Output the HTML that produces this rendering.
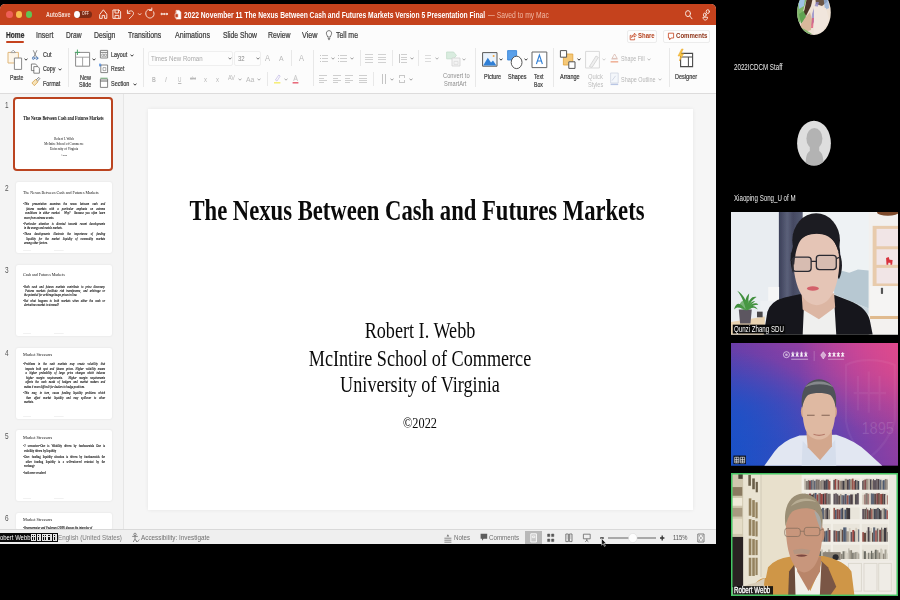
<!DOCTYPE html>
<html><head><meta charset="utf-8">
<style>
*{margin:0;padding:0;box-sizing:border-box}
html,body{width:900px;height:600px;overflow:hidden;background:#000;font-family:"Liberation Sans",sans-serif}
.t{position:absolute;white-space:nowrap;display:block}
svg{display:block}
</style></head><body>
<div style="position:absolute;left:0.0px;top:4.0px;width:716.0px;height:540.0px;background:#f1f1f1;border-radius:5px 5px 0 0;"></div>
<div style="position:absolute;left:0.0px;top:4.0px;width:716.0px;height:21.0px;background:#c5421d;border-radius:5px 5px 0 0;"></div>
<div style="position:absolute;left:6.2px;top:11.0px;width:6.4px;height:7.0px;background:#ee5f57;border-radius:50%;"></div>
<div style="position:absolute;left:16.1px;top:11.0px;width:6.4px;height:7.0px;background:#f6be4f;border-radius:50%;"></div>
<div style="position:absolute;left:26.1px;top:11.0px;width:6.4px;height:7.0px;background:#5fc454;border-radius:50%;"></div>
<span class="t" style="left:46.0px;top:11.1px;font-size:7.2px;line-height:7.2px;color:#f6dcd2;font-family:'Liberation Sans',sans-serif;transform-origin:0 50%;transform:scaleX(0.735);font-weight:bold;">AutoSave</span>
<div style="position:absolute;left:73.6px;top:10.6px;width:18.8px;height:7.8px;background:#7d2a14;border-radius:4px;"></div>
<div style="position:absolute;left:74.0px;top:10.8px;width:6.4px;height:7.4px;background:#fff;border-radius:50%;"></div>
<span class="t" style="left:82.0px;top:12.3px;font-size:4.6px;line-height:4.6px;color:#e8c5b8;font-family:'Liberation Sans',sans-serif;transform-origin:0 50%;transform:scaleX(0.761);font-weight:bold;">OFF</span>
<svg style="position:absolute;left:96px;top:5.3px" width="90" height="18" viewBox="0 0 90 18" fill="none" stroke="#f8e3da" stroke-width="1" stroke-linecap="round" stroke-linejoin="round">
<path d="M4 9.2 L7.4 4.8 L10.8 9.2 V13.4 H8.6 V10.4 H6.2 V13.4 H4 Z"/>
<path d="M17.3 5 H23 L24.6 6.6 V13.4 H17.3 Z M19 5 V8 H22.6 V5 M19 13.4 V10.4 H22.8 V13.4"/>
<path d="M31.4 5.2 V8.4 H34 M31.6 8.2 C32.6 5.4 36.6 5 37.4 7.6 C38 9.8 35.6 11.6 33.4 13.6"/>
<path d="M42.4 8.6 L43.7 10 L45 8.6" stroke-width=".9"/>
<path d="M55.6 5 C52.8 3.2 49.4 5.4 49.8 9 C50.2 12.6 54 14.2 56.6 12 C58.2 10.6 58.4 8.4 57.6 6.8 M55.8 3 V5.4 H53.4"/>
<circle cx="65.6" cy="9" r=".7" fill="#f8e3da"/><circle cx="68.2" cy="9" r=".7" fill="#f8e3da"/><circle cx="70.8" cy="9" r=".7" fill="#f8e3da"/>
<path d="M80.4 5.4 H83.2 L84.8 7.2 V14 H80.4 Z" fill="#fff" stroke="#fff" stroke-width=".6"/>
<path d="M79.4 8.8 H82.2 V12.4 H79.4 Z" fill="#c5421d" stroke="#fff" stroke-width=".5"/>
</svg>
<span class="t" style="left:183.5px;top:11.7px;font-size:8.2px;line-height:8.2px;color:#fff;font-family:'Liberation Sans',sans-serif;transform-origin:0 50%;transform:scaleX(0.819);font-weight:bold;">2022 November 11 The Nexus Between Cash and Futures Markets Version 5 Presentation Final</span>
<span class="t" style="left:487.5px;top:11.7px;font-size:8.2px;line-height:8.2px;color:#f0b9a4;font-family:'Liberation Sans',sans-serif;transform-origin:0 50%;transform:scaleX(0.826);">— Saved to my Mac</span>
<svg style="position:absolute;left:682px;top:8px" width="32" height="14" viewBox="0 0 32 14" fill="none" stroke="#f8e3da" stroke-width="1" stroke-linecap="round">
<ellipse cx="6" cy="5.6" rx="2.5" ry="3"/><path d="M7.8 8 L10 10.8"/>
<ellipse cx="25.8" cy="3.6" rx="1.6" ry="1.9"/><ellipse cx="22.8" cy="6.8" rx="1.4" ry="1.7"/><path d="M21 9.6 C21 13 25.6 13 25.6 9.6 Z"/>
</svg>
<div style="position:absolute;left:0.0px;top:25.0px;width:716.0px;height:67.5px;background:#fcfcfc;"></div>
<div style="position:absolute;left:0.0px;top:92.5px;width:716.0px;height:1.0px;background:#dddcdc;"></div>
<span class="t" style="left:5.6px;top:30.5px;font-size:8.6px;line-height:8.6px;color:#2b2b2b;font-family:'Liberation Sans',sans-serif;transform-origin:0 50%;transform:scaleX(0.770);-webkit-text-stroke:.22px #2b2b2b;font-weight:bold;">Home</span>
<span class="t" style="left:36.0px;top:30.5px;font-size:8.6px;line-height:8.6px;color:#3a3a3a;font-family:'Liberation Sans',sans-serif;transform-origin:0 50%;transform:scaleX(0.809);-webkit-text-stroke:.22px #3a3a3a;">Insert</span>
<span class="t" style="left:66.4px;top:30.5px;font-size:8.6px;line-height:8.6px;color:#3a3a3a;font-family:'Liberation Sans',sans-serif;transform-origin:0 50%;transform:scaleX(0.777);-webkit-text-stroke:.22px #3a3a3a;">Draw</span>
<span class="t" style="left:94.0px;top:30.5px;font-size:8.6px;line-height:8.6px;color:#3a3a3a;font-family:'Liberation Sans',sans-serif;transform-origin:0 50%;transform:scaleX(0.799);-webkit-text-stroke:.22px #3a3a3a;">Design</span>
<span class="t" style="left:128.4px;top:30.5px;font-size:8.6px;line-height:8.6px;color:#3a3a3a;font-family:'Liberation Sans',sans-serif;transform-origin:0 50%;transform:scaleX(0.795);-webkit-text-stroke:.22px #3a3a3a;">Transitions</span>
<span class="t" style="left:175.0px;top:30.5px;font-size:8.6px;line-height:8.6px;color:#3a3a3a;font-family:'Liberation Sans',sans-serif;transform-origin:0 50%;transform:scaleX(0.823);-webkit-text-stroke:.22px #3a3a3a;">Animations</span>
<span class="t" style="left:222.5px;top:30.5px;font-size:8.6px;line-height:8.6px;color:#3a3a3a;font-family:'Liberation Sans',sans-serif;transform-origin:0 50%;transform:scaleX(0.790);-webkit-text-stroke:.22px #3a3a3a;">Slide Show</span>
<span class="t" style="left:267.5px;top:30.5px;font-size:8.6px;line-height:8.6px;color:#3a3a3a;font-family:'Liberation Sans',sans-serif;transform-origin:0 50%;transform:scaleX(0.798);-webkit-text-stroke:.22px #3a3a3a;">Review</span>
<span class="t" style="left:301.5px;top:30.5px;font-size:8.6px;line-height:8.6px;color:#3a3a3a;font-family:'Liberation Sans',sans-serif;transform-origin:0 50%;transform:scaleX(0.839);-webkit-text-stroke:.22px #3a3a3a;">View</span>
<span class="t" style="left:336.0px;top:30.5px;font-size:8.6px;line-height:8.6px;color:#3a3a3a;font-family:'Liberation Sans',sans-serif;transform-origin:0 50%;transform:scaleX(0.808);-webkit-text-stroke:.22px #3a3a3a;">Tell me</span>
<div style="position:absolute;left:6.0px;top:41.0px;width:18.0px;height:1.6px;background:#c5421d;border-radius:1px;"></div>
<svg style="position:absolute;left:324px;top:29px" width="10" height="12" viewBox="0 0 10 12" fill="none" stroke="#555" stroke-width=".8"><path d="M3.6 8 C3.6 6.6 2.4 6 2.4 4.2 C2.4 .8 7.6 .8 7.6 4.2 C7.6 6 6.4 6.6 6.4 8 Z M3.8 9.4 H6.2 M4.2 10.6 H5.8"/></svg>
<div style="position:absolute;left:626.7px;top:29.5px;width:30.6px;height:13.2px;background:#fdfdfd;border:1px solid #ececec;border-radius:2px;"></div>
<div style="position:absolute;left:663.3px;top:29.5px;width:46.7px;height:13.2px;background:#fdfdfd;border:1px solid #ececec;border-radius:2px;"></div>
<span class="t" style="left:638.3px;top:32.1px;font-size:7.8px;line-height:7.8px;color:#b5421f;font-family:'Liberation Sans',sans-serif;transform-origin:0 50%;transform:scaleX(0.770);font-weight:bold;">Share</span>
<span class="t" style="left:676.0px;top:32.1px;font-size:7.8px;line-height:7.8px;color:#8f3418;font-family:'Liberation Sans',sans-serif;transform-origin:0 50%;transform:scaleX(0.777);font-weight:bold;">Comments</span>
<svg style="position:absolute;left:628px;top:31px" width="50" height="11" viewBox="0 0 50 11" fill="none" stroke="#c5421d" stroke-width=".8" stroke-linejoin="round"><path d="M3.4 4.4 H2.2 V8.8 H6.6 V7.4 M3.6 6.6 C3.8 4.6 5 3.6 6.4 3.6 V2.2 L8.4 4.2 L6.4 6.2 V4.8 C5.2 4.8 4.4 5.4 3.6 6.6 Z"/><path d="M40.4 2.2 H45.6 V7 H43 L41.6 8.8 V7 H40.4 Z"/></svg>
<svg style="position:absolute;left:6px;top:48px" width="20" height="24" viewBox="0 0 20 24" fill="none" stroke-linejoin="round">
<path d="M2 4.4 H12.4 V15 H2 Z" fill="#fdf6ea" stroke="#e0b679" stroke-width="1"/>
<path d="M4.8 4.6 L7.2 2.2 L9.6 4.6 Z" fill="#fff" stroke="#9a9a9a" stroke-width=".9"/>
<path d="M8.4 10 H15.6 V21.4 H8.4 Z" fill="#fff" stroke="#8a8a8a" stroke-width="1"/>
</svg>
<svg style="position:absolute;left:23.6px;top:58.1px" width="4" height="3" viewBox="0 0 4 3" fill="none" stroke="#333" stroke-width=".95"><path d="M.5 .6 L2 2.2 L3.5 .6"/></svg>
<span class="t" style="left:10.0px;top:73.8px;font-size:7.2px;line-height:7.2px;color:#3a3a3a;font-family:'Liberation Sans',sans-serif;transform-origin:0 50%;transform:scaleX(0.722);-webkit-text-stroke:.22px #3a3a3a;">Paste</span>
<svg style="position:absolute;left:30px;top:48px" width="12" height="40" viewBox="0 0 12 40" fill="none" stroke-linejoin="round" stroke-linecap="round">
<path d="M3.4 2.6 L6.4 9 M6.8 2.6 L3.8 9" stroke="#777" stroke-width=".8"/><ellipse cx="3.4" cy="10.2" rx="1" ry="1.3" stroke="#3f6fb0" stroke-width=".8"/><ellipse cx="6.8" cy="10.2" rx="1" ry="1.3" stroke="#3f6fb0" stroke-width=".8"/>
<path d="M1.8 16 H5.6 L7 17.6 V22.6 H1.8 Z" fill="#fff" stroke="#666" stroke-width=".8"/><path d="M4.2 18.6 H8 L9.4 20.2 V25.2 H4.2 Z" fill="#fff" stroke="#666" stroke-width=".8"/>
<path d="M2.2 34.6 L5.6 31.4 L8 33.8 L4.6 37.4 Z" fill="#f7e3b8" stroke="#d6a24c" stroke-width=".8"/><path d="M6.4 31.6 L8.8 29.4 L9.8 30.6 L7.6 33" stroke="#666" stroke-width=".8"/>
</svg>
<span class="t" style="left:42.5px;top:51.4px;font-size:7.2px;line-height:7.2px;color:#3a3a3a;font-family:'Liberation Sans',sans-serif;transform-origin:0 50%;transform:scaleX(0.759);-webkit-text-stroke:.22px #3a3a3a;">Cut</span>
<span class="t" style="left:42.5px;top:65.4px;font-size:7.2px;line-height:7.2px;color:#3a3a3a;font-family:'Liberation Sans',sans-serif;transform-origin:0 50%;transform:scaleX(0.744);-webkit-text-stroke:.22px #3a3a3a;">Copy</span>
<svg style="position:absolute;left:57.7px;top:67.9px" width="4" height="3" viewBox="0 0 4 3" fill="none" stroke="#333" stroke-width=".95"><path d="M.5 .6 L2 2.2 L3.5 .6"/></svg>
<span class="t" style="left:42.5px;top:80.0px;font-size:7.2px;line-height:7.2px;color:#3a3a3a;font-family:'Liberation Sans',sans-serif;transform-origin:0 50%;transform:scaleX(0.754);-webkit-text-stroke:.22px #3a3a3a;">Format</span>
<div style="position:absolute;left:68.3px;top:48.0px;width:0.8px;height:39.0px;background:#e8e8e8;"></div>
<svg style="position:absolute;left:74px;top:48px" width="18" height="20" viewBox="0 0 18 20" fill="none">
<path d="M1.6 4.4 H15.6 V18.2 H1.6 Z" fill="#fff" stroke="#8a8a8a" stroke-width="1"/><path d="M1.6 9.2 H15.6 M8.6 9.2 V18.2" stroke="#9a9a9a" stroke-width=".9"/>
<path d="M3.4 1.6 V7 M.8 4.4 H6" stroke="#4ea66a" stroke-width="1"/></svg>
<svg style="position:absolute;left:92.2px;top:58.1px" width="4" height="3" viewBox="0 0 4 3" fill="none" stroke="#333" stroke-width=".95"><path d="M.5 .6 L2 2.2 L3.5 .6"/></svg>
<span class="t" style="left:80.0px;top:73.9px;font-size:7.2px;line-height:7.2px;color:#3a3a3a;font-family:'Liberation Sans',sans-serif;transform-origin:0 50%;transform:scaleX(0.764);-webkit-text-stroke:.22px #3a3a3a;">New</span>
<span class="t" style="left:79.0px;top:81.0px;font-size:7.2px;line-height:7.2px;color:#3a3a3a;font-family:'Liberation Sans',sans-serif;transform-origin:0 50%;transform:scaleX(0.768);-webkit-text-stroke:.22px #3a3a3a;">Slide</span>
<svg style="position:absolute;left:99px;top:48px" width="10" height="41" viewBox="0 0 10 41" fill="none" stroke="#777" stroke-width=".9">
<path d="M1.4 2.4 H8.6 V10 H1.4 Z" fill="#fff"/><path d="M1.4 4.4 H8.6"/><path d="M2.8 6 H4.6 V8.4 H2.8 Z M5.6 6 H7.4 V8.4 H5.6 Z" stroke-width=".6"/>
<path d="M1.8 17 H8.6 V24.6 H1.8 Z" fill="#fff"/><path d="M1 15.4 V18.6 M0 17 H2.4" stroke="#3b7dd8"/><path d="M4 19.6 H6.8 V22.6 H4 Z" stroke-width=".6"/>
<path d="M1.4 31 H8.6 V39.4 H1.4 Z" fill="#fff"/><path d="M1.4 33 H8.6" stroke="#555"/><path d="M1.4 30.2 H8.6" stroke="#6aa86f"/>
</svg>
<span class="t" style="left:111.3px;top:51.2px;font-size:7.2px;line-height:7.2px;color:#3a3a3a;font-family:'Liberation Sans',sans-serif;transform-origin:0 50%;transform:scaleX(0.749);-webkit-text-stroke:.22px #3a3a3a;">Layout</span>
<svg style="position:absolute;left:130.2px;top:53.7px" width="4" height="3" viewBox="0 0 4 3" fill="none" stroke="#333" stroke-width=".95"><path d="M.5 .6 L2 2.2 L3.5 .6"/></svg>
<span class="t" style="left:111.3px;top:65.2px;font-size:7.2px;line-height:7.2px;color:#3a3a3a;font-family:'Liberation Sans',sans-serif;transform-origin:0 50%;transform:scaleX(0.713);-webkit-text-stroke:.22px #3a3a3a;">Reset</span>
<span class="t" style="left:111.3px;top:80.0px;font-size:7.2px;line-height:7.2px;color:#3a3a3a;font-family:'Liberation Sans',sans-serif;transform-origin:0 50%;transform:scaleX(0.766);-webkit-text-stroke:.22px #3a3a3a;">Section</span>
<svg style="position:absolute;left:132.7px;top:82.5px" width="4" height="3" viewBox="0 0 4 3" fill="none" stroke="#333" stroke-width=".95"><path d="M.5 .6 L2 2.2 L3.5 .6"/></svg>
<div style="position:absolute;left:142.5px;top:48.0px;width:0.8px;height:39.0px;background:#e8e8e8;"></div>
<div style="position:absolute;left:148.0px;top:50.8px;width:84.5px;height:15.0px;background:#fdfdfd;border:1px solid #efefef;border-radius:2px;"></div>
<div style="position:absolute;left:234.2px;top:50.8px;width:26.6px;height:15.0px;background:#fdfdfd;border:1px solid #efefef;border-radius:2px;"></div>
<span class="t" style="left:151.3px;top:54.8px;font-size:7.2px;line-height:7.2px;color:#a9a9a9;font-family:'Liberation Sans',sans-serif;transform-origin:0 50%;transform:scaleX(0.848);">Times New Roman</span>
<svg style="position:absolute;left:227.7px;top:57.1px" width="4" height="3" viewBox="0 0 4 3" fill="none" stroke="#777" stroke-width=".95"><path d="M.5 .6 L2 2.2 L3.5 .6"/></svg>
<span class="t" style="left:238.0px;top:54.8px;font-size:7.2px;line-height:7.2px;color:#8a8a8a;font-family:'Liberation Sans',sans-serif;transform-origin:0 50%;transform:scaleX(0.837);">32</span>
<svg style="position:absolute;left:255.5px;top:57.1px" width="4" height="3" viewBox="0 0 4 3" fill="none" stroke="#777" stroke-width=".95"><path d="M.5 .6 L2 2.2 L3.5 .6"/></svg>
<span class="t" style="left:265.0px;top:53.9px;font-size:8.6px;line-height:8.6px;color:#b9b9b9;font-family:'Liberation Sans',sans-serif;transform-origin:0 50%;transform:scaleX(0.872);">A</span>
<span class="t" style="left:278.7px;top:55.0px;font-size:7.6px;line-height:7.6px;color:#b9b9b9;font-family:'Liberation Sans',sans-serif;transform-origin:0 50%;transform:scaleX(0.908);">A</span>
<div style="position:absolute;left:291.0px;top:50.0px;width:0.8px;height:16.0px;background:#e8e8e8;"></div>
<span class="t" style="left:299.0px;top:53.9px;font-size:8.6px;line-height:8.6px;color:#b9b9b9;font-family:'Liberation Sans',sans-serif;transform-origin:0 50%;transform:scaleX(0.872);">A</span>
<span class="t" style="left:152.0px;top:75.5px;font-size:7.4px;line-height:7.4px;color:#b9b9b9;font-family:'Liberation Sans',sans-serif;transform-origin:0 50%;transform:scaleX(0.711);font-weight:bold;">B</span>
<span class="t" style="left:165.0px;top:75.5px;font-size:7.4px;line-height:7.4px;color:#b9b9b9;font-family:'Liberation Sans',sans-serif;transform-origin:0 50%;transform:scaleX(0.876);font-style:italic;">I</span>
<span class="t" style="left:178.0px;top:75.5px;font-size:7.4px;line-height:7.4px;color:#b9b9b9;font-family:'Liberation Sans',sans-serif;transform-origin:0 50%;transform:scaleX(0.636);text-decoration:underline;">U</span>
<span class="t" style="left:189.6px;top:76.4px;font-size:5.6px;line-height:5.6px;color:#b9b9b9;font-family:'Liberation Sans',sans-serif;transform-origin:0 50%;transform:scaleX(0.665);text-decoration:line-through;">abc</span>
<span class="t" style="left:204.0px;top:76.0px;font-size:7.4px;line-height:7.4px;color:#b9b9b9;font-family:'Liberation Sans',sans-serif;transform-origin:0 50%;transform:scaleX(0.811);">x</span>
<span class="t" style="left:216.4px;top:75.5px;font-size:7.4px;line-height:7.4px;color:#b9b9b9;font-family:'Liberation Sans',sans-serif;transform-origin:0 50%;transform:scaleX(0.811);">x</span>
<span class="t" style="left:227.8px;top:75.2px;font-size:6.8px;line-height:6.8px;color:#b9b9b9;font-family:'Liberation Sans',sans-serif;transform-origin:0 50%;transform:scaleX(0.817);">AV</span>
<svg style="position:absolute;left:238.3px;top:78.1px" width="4" height="3" viewBox="0 0 4 3" fill="none" stroke="#aaa" stroke-width=".95"><path d="M.5 .6 L2 2.2 L3.5 .6"/></svg>
<span class="t" style="left:246.4px;top:75.6px;font-size:7.2px;line-height:7.2px;color:#b9b9b9;font-family:'Liberation Sans',sans-serif;transform-origin:0 50%;transform:scaleX(0.954);">Aa</span>
<svg style="position:absolute;left:257.0px;top:78.1px" width="4" height="3" viewBox="0 0 4 3" fill="none" stroke="#aaa" stroke-width=".95"><path d="M.5 .6 L2 2.2 L3.5 .6"/></svg>
<div style="position:absolute;left:266.7px;top:72.0px;width:0.8px;height:14.0px;background:#e8e8e8;"></div>
<svg style="position:absolute;left:272px;top:73px" width="30" height="12" viewBox="0 0 30 12" fill="none"><path d="M3.4 7 L6.8 2 L8.2 3 L5 8 Z" stroke="#c9c2e8" stroke-width=".8"/><path d="M2 9.8 H8.4" stroke="#f5ec6a" stroke-width="1.4"/><path d="M21.6 8 L23.6 2.2 L25.6 8 M22.2 6.2 H25" stroke="#c4c4c4" stroke-width=".8"/><path d="M20.6 9.8 H26.4" stroke="#e65a6d" stroke-width="1.4"/></svg>
<svg style="position:absolute;left:283.8px;top:78.1px" width="4" height="3" viewBox="0 0 4 3" fill="none" stroke="#aaa" stroke-width=".95"><path d="M.5 .6 L2 2.2 L3.5 .6"/></svg>
<div style="position:absolute;left:313.0px;top:50.0px;width:0.8px;height:36.0px;background:#e8e8e8;"></div>
<div style="position:absolute;left:321.8px;top:55.2px;width:6.5px;height:0.8px;background:#cfcfcf;"></div>
<div style="position:absolute;left:321.8px;top:58.0px;width:6.5px;height:0.8px;background:#cfcfcf;"></div>
<div style="position:absolute;left:321.8px;top:60.8px;width:6.5px;height:0.8px;background:#cfcfcf;"></div>
<div style="position:absolute;left:319.6px;top:55.2px;width:1.2px;height:0.8px;background:#c4c4c4;"></div>
<div style="position:absolute;left:319.6px;top:58.0px;width:1.2px;height:0.8px;background:#c4c4c4;"></div>
<div style="position:absolute;left:319.6px;top:60.8px;width:1.2px;height:0.8px;background:#c4c4c4;"></div>
<div style="position:absolute;left:340.4px;top:55.2px;width:6.5px;height:0.8px;background:#cfcfcf;"></div>
<div style="position:absolute;left:340.4px;top:58.0px;width:6.5px;height:0.8px;background:#cfcfcf;"></div>
<div style="position:absolute;left:340.4px;top:60.8px;width:6.5px;height:0.8px;background:#cfcfcf;"></div>
<div style="position:absolute;left:338.3px;top:55.2px;width:1.2px;height:0.8px;background:#c4c4c4;"></div>
<div style="position:absolute;left:338.3px;top:58.0px;width:1.2px;height:0.8px;background:#c4c4c4;"></div>
<div style="position:absolute;left:338.3px;top:60.8px;width:1.2px;height:0.8px;background:#c4c4c4;"></div>
<svg style="position:absolute;left:330.7px;top:57.3px" width="4" height="3" viewBox="0 0 4 3" fill="none" stroke="#999" stroke-width=".95"><path d="M.5 .6 L2 2.2 L3.5 .6"/></svg>
<svg style="position:absolute;left:349.7px;top:57.3px" width="4" height="3" viewBox="0 0 4 3" fill="none" stroke="#999" stroke-width=".95"><path d="M.5 .6 L2 2.2 L3.5 .6"/></svg>
<div style="position:absolute;left:360.0px;top:50.0px;width:0.8px;height:16.0px;background:#e8e8e8;"></div>
<div style="position:absolute;left:365.0px;top:54.4px;width:8.0px;height:0.8px;background:#d2d2d2;"></div>
<div style="position:absolute;left:365.0px;top:56.8px;width:8.0px;height:0.8px;background:#d2d2d2;"></div>
<div style="position:absolute;left:365.0px;top:59.2px;width:8.0px;height:0.8px;background:#d2d2d2;"></div>
<div style="position:absolute;left:365.0px;top:61.6px;width:8.0px;height:0.8px;background:#d2d2d2;"></div>
<div style="position:absolute;left:378.3px;top:54.4px;width:8.0px;height:0.8px;background:#d2d2d2;"></div>
<div style="position:absolute;left:378.3px;top:56.8px;width:8.0px;height:0.8px;background:#d2d2d2;"></div>
<div style="position:absolute;left:378.3px;top:59.2px;width:8.0px;height:0.8px;background:#d2d2d2;"></div>
<div style="position:absolute;left:378.3px;top:61.6px;width:8.0px;height:0.8px;background:#d2d2d2;"></div>
<div style="position:absolute;left:391.7px;top:50.0px;width:0.8px;height:16.0px;background:#e8e8e8;"></div>
<div style="position:absolute;left:401.0px;top:54.4px;width:6.0px;height:0.8px;background:#cfcfcf;"></div>
<div style="position:absolute;left:401.0px;top:56.8px;width:6.0px;height:0.8px;background:#cfcfcf;"></div>
<div style="position:absolute;left:401.0px;top:59.2px;width:6.0px;height:0.8px;background:#cfcfcf;"></div>
<div style="position:absolute;left:401.0px;top:61.6px;width:6.0px;height:0.8px;background:#cfcfcf;"></div>
<div style="position:absolute;left:399.2px;top:54.0px;width:0.8px;height:9.0px;background:#c4c4c4;"></div>
<svg style="position:absolute;left:409.7px;top:57.3px" width="4" height="3" viewBox="0 0 4 3" fill="none" stroke="#999" stroke-width=".95"><path d="M.5 .6 L2 2.2 L3.5 .6"/></svg>
<div style="position:absolute;left:418.3px;top:50.0px;width:0.8px;height:16.0px;background:#e8e8e8;"></div>
<div style="position:absolute;left:425.3px;top:55.4px;width:6.0px;height:0.8px;background:#dcdcdc;"></div>
<div style="position:absolute;left:425.3px;top:58.0px;width:6.0px;height:0.8px;background:#dcdcdc;"></div>
<div style="position:absolute;left:425.3px;top:60.6px;width:6.0px;height:0.8px;background:#dcdcdc;"></div>
<svg style="position:absolute;left:434.7px;top:57.3px" width="4" height="3" viewBox="0 0 4 3" fill="none" stroke="#aaa" stroke-width=".95"><path d="M.5 .6 L2 2.2 L3.5 .6"/></svg>
<div style="position:absolute;left:319.3px;top:75.2px;width:8.0px;height:0.8px;background:#cfcfcf;"></div>
<div style="position:absolute;left:319.3px;top:77.6px;width:5.2px;height:0.8px;background:#cfcfcf;"></div>
<div style="position:absolute;left:319.3px;top:80.0px;width:8.0px;height:0.8px;background:#cfcfcf;"></div>
<div style="position:absolute;left:319.3px;top:82.4px;width:5.2px;height:0.8px;background:#cfcfcf;"></div>
<div style="position:absolute;left:332.7px;top:75.2px;width:8.0px;height:0.8px;background:#cfcfcf;"></div>
<div style="position:absolute;left:332.7px;top:77.6px;width:5.2px;height:0.8px;background:#cfcfcf;"></div>
<div style="position:absolute;left:332.7px;top:80.0px;width:8.0px;height:0.8px;background:#cfcfcf;"></div>
<div style="position:absolute;left:332.7px;top:82.4px;width:5.2px;height:0.8px;background:#cfcfcf;"></div>
<div style="position:absolute;left:345.3px;top:75.2px;width:8.0px;height:0.8px;background:#cfcfcf;"></div>
<div style="position:absolute;left:345.3px;top:77.6px;width:5.2px;height:0.8px;background:#cfcfcf;"></div>
<div style="position:absolute;left:345.3px;top:80.0px;width:8.0px;height:0.8px;background:#cfcfcf;"></div>
<div style="position:absolute;left:345.3px;top:82.4px;width:5.2px;height:0.8px;background:#cfcfcf;"></div>
<div style="position:absolute;left:358.7px;top:75.2px;width:8.0px;height:0.8px;background:#cfcfcf;"></div>
<div style="position:absolute;left:358.7px;top:77.6px;width:8.0px;height:0.8px;background:#cfcfcf;"></div>
<div style="position:absolute;left:358.7px;top:80.0px;width:8.0px;height:0.8px;background:#cfcfcf;"></div>
<div style="position:absolute;left:358.7px;top:82.4px;width:8.0px;height:0.8px;background:#cfcfcf;"></div>
<div style="position:absolute;left:372.7px;top:72.0px;width:0.8px;height:14.0px;background:#e8e8e8;"></div>
<div style="position:absolute;left:381.6px;top:74.4px;width:0.8px;height:9.6px;background:#c4c4c4;"></div>
<div style="position:absolute;left:384.6px;top:74.4px;width:0.8px;height:9.6px;background:#c4c4c4;"></div>
<svg style="position:absolute;left:389.7px;top:78.1px" width="4" height="3" viewBox="0 0 4 3" fill="none" stroke="#999" stroke-width=".95"><path d="M.5 .6 L2 2.2 L3.5 .6"/></svg>
<div style="position:absolute;left:398.6px;top:75.4px;width:6.2px;height:7.6px;background:transparent;border:1px dashed #c8c8c8;"></div>
<svg style="position:absolute;left:408.7px;top:78.1px" width="4" height="3" viewBox="0 0 4 3" fill="none" stroke="#999" stroke-width=".95"><path d="M.5 .6 L2 2.2 L3.5 .6"/></svg>
<svg style="position:absolute;left:445px;top:50px" width="18" height="18" viewBox="0 0 18 18" fill="none"><path d="M1.6 2 H8.6 L11.4 5.4 L8.6 8.8 H1.6 Z" fill="#d9ecdf" stroke="#c3ddcb" stroke-width=".8"/><path d="M7 8 H15 V16 H7 Z" fill="#f4f4f4" stroke="#d2d2d2" stroke-width=".8"/><path d="M9 11.4 H13 V14.4 H9 Z" stroke="#dadada" stroke-width=".7"/></svg>
<svg style="position:absolute;left:462.3px;top:57.5px" width="4" height="3" viewBox="0 0 4 3" fill="none" stroke="#aaa" stroke-width=".95"><path d="M.5 .6 L2 2.2 L3.5 .6"/></svg>
<span class="t" style="left:442.7px;top:73.4px;font-size:6.8px;line-height:6.8px;color:#8f8f8f;font-family:'Liberation Sans',sans-serif;transform-origin:0 50%;transform:scaleX(0.848);">Convert to</span>
<span class="t" style="left:444.3px;top:80.8px;font-size:6.8px;line-height:6.8px;color:#8f8f8f;font-family:'Liberation Sans',sans-serif;transform-origin:0 50%;transform:scaleX(0.835);">SmartArt</span>
<div style="position:absolute;left:475.0px;top:48.0px;width:0.8px;height:39.0px;background:#e8e8e8;"></div>
<svg style="position:absolute;left:481px;top:50px" width="18" height="18" viewBox="0 0 18 18" fill="none"><path d="M1.6 2.6 H16 V16.2 H1.6 Z" fill="#eaf3fc" stroke="#5a5a5a" stroke-width="1"/><path d="M2.2 15.6 L6.8 7.8 L10 12.4 L12 10.4 L15.4 15.6 Z" fill="#2f7fd6"/><circle cx="12.6" cy="6" r="1" fill="#f2a541"/></svg>
<svg style="position:absolute;left:499.4px;top:58.1px" width="4" height="3" viewBox="0 0 4 3" fill="none" stroke="#333" stroke-width=".95"><path d="M.5 .6 L2 2.2 L3.5 .6"/></svg>
<span class="t" style="left:483.9px;top:73.4px;font-size:7.2px;line-height:7.2px;color:#3a3a3a;font-family:'Liberation Sans',sans-serif;transform-origin:0 50%;transform:scaleX(0.768);-webkit-text-stroke:.22px #3a3a3a;">Picture</span>
<svg style="position:absolute;left:506px;top:49px" width="18" height="21" viewBox="0 0 18 21" fill="none"><path d="M1.6 1.6 H10.6 V11 H1.6 Z" fill="#5aa0ea" stroke="#2f7fd6" stroke-width=".8"/><ellipse cx="10.6" cy="13.4" rx="5.4" ry="6.2" fill="#fff" stroke="#555" stroke-width="1"/></svg>
<svg style="position:absolute;left:524.4px;top:58.1px" width="4" height="3" viewBox="0 0 4 3" fill="none" stroke="#333" stroke-width=".95"><path d="M.5 .6 L2 2.2 L3.5 .6"/></svg>
<span class="t" style="left:507.8px;top:73.4px;font-size:7.2px;line-height:7.2px;color:#3a3a3a;font-family:'Liberation Sans',sans-serif;transform-origin:0 50%;transform:scaleX(0.762);-webkit-text-stroke:.22px #3a3a3a;">Shapes</span>
<svg style="position:absolute;left:531px;top:50px" width="17" height="19" viewBox="0 0 17 19" fill="none"><path d="M1 2 H15.8 V17.6 H1 Z" fill="#fff" stroke="#666" stroke-width="1"/><path d="M5.4 14 L8.4 5 L11.4 14 M6.4 11 H10.4" stroke="#2f7fd6" stroke-width="1.1"/></svg>
<span class="t" style="left:534.4px;top:73.4px;font-size:7.2px;line-height:7.2px;color:#3a3a3a;font-family:'Liberation Sans',sans-serif;transform-origin:0 50%;transform:scaleX(0.720);-webkit-text-stroke:.22px #3a3a3a;">Text</span>
<span class="t" style="left:534.4px;top:80.9px;font-size:7.2px;line-height:7.2px;color:#3a3a3a;font-family:'Liberation Sans',sans-serif;transform-origin:0 50%;transform:scaleX(0.717);-webkit-text-stroke:.22px #3a3a3a;">Box</span>
<div style="position:absolute;left:553.3px;top:48.0px;width:0.8px;height:39.0px;background:#e8e8e8;"></div>
<svg style="position:absolute;left:559px;top:49px" width="18" height="21" viewBox="0 0 18 21" fill="none"><path d="M4.4 5 H13.8 V16 H4.4 Z" fill="#f5c877" stroke="#e0a23c" stroke-width=".8"/><path d="M1.4 1.6 H7.6 V8.2 H1.4 Z" fill="#fff" stroke="#555" stroke-width="1"/><path d="M9.8 12.8 H16 V19.4 H9.8 Z" fill="#fff" stroke="#555" stroke-width="1"/></svg>
<svg style="position:absolute;left:577.4px;top:58.1px" width="4" height="3" viewBox="0 0 4 3" fill="none" stroke="#333" stroke-width=".95"><path d="M.5 .6 L2 2.2 L3.5 .6"/></svg>
<span class="t" style="left:560.3px;top:73.4px;font-size:7.2px;line-height:7.2px;color:#3a3a3a;font-family:'Liberation Sans',sans-serif;transform-origin:0 50%;transform:scaleX(0.769);-webkit-text-stroke:.22px #3a3a3a;">Arrange</span>
<svg style="position:absolute;left:584px;top:50px" width="18" height="20" viewBox="0 0 18 20" fill="none"><path d="M1.6 1.4 H15.4 V18 H1.6 Z" fill="#fcfcfc" stroke="#d9d9d9" stroke-width="1"/><path d="M5.4 16.6 L12 6 L14.4 7.4 L8 17.4 Z" fill="#efefef" stroke="#cfcfcf" stroke-width=".8"/></svg>
<svg style="position:absolute;left:602.4px;top:58.1px" width="4" height="3" viewBox="0 0 4 3" fill="none" stroke="#ccc" stroke-width=".95"><path d="M.5 .6 L2 2.2 L3.5 .6"/></svg>
<span class="t" style="left:588.0px;top:73.4px;font-size:7.2px;line-height:7.2px;color:#bdbdbd;font-family:'Liberation Sans',sans-serif;transform-origin:0 50%;transform:scaleX(0.804);">Quick</span>
<span class="t" style="left:587.5px;top:80.9px;font-size:7.2px;line-height:7.2px;color:#bdbdbd;font-family:'Liberation Sans',sans-serif;transform-origin:0 50%;transform:scaleX(0.780);">Styles</span>
<svg style="position:absolute;left:609px;top:52px" width="11" height="34" viewBox="0 0 11 34" fill="none"><path d="M3 6.4 L5.6 2 L8.2 6.4 Z M2.4 7 H8.6" stroke="#d9b9ae" stroke-width=".8"/><path d="M1.6 9.8 H9.2" stroke="#f0b49b" stroke-width="1.6"/><path d="M1.6 21 H9.2 V31 H1.6 Z" fill="#f4f7fb" stroke="#cfd6e2" stroke-width=".8"/><path d="M3 28.6 L6.6 23.8" stroke="#c9cfe0" stroke-width=".8"/><path d="M1.6 32.4 H9.2" stroke="#b9c6e4" stroke-width="1.4"/></svg>
<span class="t" style="left:621.4px;top:55.3px;font-size:7.2px;line-height:7.2px;color:#b5b5b5;font-family:'Liberation Sans',sans-serif;transform-origin:0 50%;transform:scaleX(0.737);">Shape Fill</span>
<svg style="position:absolute;left:647.2px;top:57.8px" width="4" height="3" viewBox="0 0 4 3" fill="none" stroke="#bbb" stroke-width=".95"><path d="M.5 .6 L2 2.2 L3.5 .6"/></svg>
<span class="t" style="left:621.4px;top:75.8px;font-size:7.2px;line-height:7.2px;color:#b5b5b5;font-family:'Liberation Sans',sans-serif;transform-origin:0 50%;transform:scaleX(0.760);">Shape Outline</span>
<svg style="position:absolute;left:658.3px;top:78.3px" width="4" height="3" viewBox="0 0 4 3" fill="none" stroke="#bbb" stroke-width=".95"><path d="M.5 .6 L2 2.2 L3.5 .6"/></svg>
<div style="position:absolute;left:668.6px;top:48.0px;width:0.8px;height:39.0px;background:#e8e8e8;"></div>
<svg style="position:absolute;left:676px;top:48px" width="19" height="21" viewBox="0 0 19 21" fill="none"><path d="M4.6 5.4 H16.6 V18.6 H4.6 Z" fill="#fff" stroke="#4a4a4a" stroke-width="1.1"/><path d="M4.6 9 H16.6 M12.4 9 V18.6" stroke="#4a4a4a" stroke-width="1"/><path d="M5.6 1 L2 8 H4.6 L3.4 13 L7.6 5.8 H5 L7.2 1 Z" fill="#f7c544" stroke="#e8a72c" stroke-width=".5"/></svg>
<span class="t" style="left:675.0px;top:73.4px;font-size:7.2px;line-height:7.2px;color:#3a3a3a;font-family:'Liberation Sans',sans-serif;transform-origin:0 50%;transform:scaleX(0.771);-webkit-text-stroke:.22px #3a3a3a;">Designer</span>
<div style="position:absolute;left:0.0px;top:93.5px;width:122.6px;height:436.5px;background:#f4f4f4;"></div>
<div style="position:absolute;left:122.6px;top:93.5px;width:1.0px;height:436.5px;background:#e6e6e6;"></div>
<span class="t" style="left:4.6px;top:101.0px;font-size:8.4px;line-height:8.4px;color:#555;font-family:'Liberation Sans',sans-serif;transform-origin:0 50%;transform:scaleX(0.771);">1</span>
<div style="position:absolute;left:13.2px;top:97.2px;width:100.2px;height:74.2px;background:#fff;border:2px solid #bb4420;border-radius:4px;"></div>
<div style="position:absolute;left:15.8px;top:99.6px;width:544px;height:402.0px;overflow:hidden;transform-origin:0 0;transform:scale(0.1765);"><span class="t" style="left:-131px;width:800px;text-align:center;top:88px;font-size:29px;line-height:29px;color:#0a0a0a;font-family:'Liberation Serif',serif;font-weight:bold;transform:scaleX(0.781)">The Nexus Between Cash and Futures Markets</span>
<span class="t" style="left:-128px;width:800px;text-align:center;top:206px;font-size:23px;line-height:23px;color:#0a0a0a;font-family:'Liberation Serif',serif;transform:scaleX(0.79)">Robert I. Webb</span>
<span class="t" style="left:-128px;width:800px;text-align:center;top:234px;font-size:23px;line-height:23px;color:#0a0a0a;font-family:'Liberation Serif',serif;transform:scaleX(0.79)">McIntire School of Commerce</span>
<span class="t" style="left:-128px;width:800px;text-align:center;top:262px;font-size:23px;line-height:23px;color:#0a0a0a;font-family:'Liberation Serif',serif;transform:scaleX(0.79)">University of Virginia</span>
<span class="t" style="left:-128px;width:800px;text-align:center;top:304px;font-size:15px;line-height:15px;color:#0a0a0a;font-family:'Liberation Serif',serif;transform:scaleX(0.82)">©2022</span>
</div>
<span class="t" style="left:4.6px;top:183.6px;font-size:8.4px;line-height:8.4px;color:#555;font-family:'Liberation Sans',sans-serif;transform-origin:0 50%;transform:scaleX(0.771);">2</span>
<div style="position:absolute;left:15.8px;top:182.2px;width:96.0px;height:71.0px;background:#fff;border-radius:2px;box-shadow:0 0 2px rgba(0,0,0,.10);"></div>
<div style="position:absolute;left:15.8px;top:182.2px;width:544px;height:402.0px;overflow:hidden;transform-origin:0 0;transform:scale(0.1765);"><span class="t" style="left:40.0px;top:44.5px;font-size:27px;line-height:27px;color:#111;font-family:'Liberation Serif',serif;transform-origin:0 50%;transform:scaleX(0.842);">The Nexus Between Cash and Futures Markets</span>
<div style="position:absolute;left:41px;top:115.8px;width:587.3px;font:italic 20.5px/20.5px 'Liberation Serif',serif;color:#222;white-space:nowrap;-webkit-text-stroke:.7px #222;text-align:justify;text-align-last:justify;transform-origin:0 50%;transform:scaleX(0.79);">•This presentation examines the nexus between cash and</div>
<div style="position:absolute;left:41px;top:140.9px;width:587.3px;font:italic 20.5px/20.5px 'Liberation Serif',serif;color:#222;white-space:nowrap;-webkit-text-stroke:.7px #222;text-align:justify;text-align-last:justify;transform-origin:0 50%;transform:scaleX(0.79);">&nbsp;futures markets with a particular emphasis on extreme</div>
<div style="position:absolute;left:41px;top:166.1px;width:587.3px;font:italic 20.5px/20.5px 'Liberation Serif',serif;color:#222;white-space:nowrap;-webkit-text-stroke:.7px #222;text-align:justify;text-align-last:justify;transform-origin:0 50%;transform:scaleX(0.79);">&nbsp;conditions in either market.&nbsp; Why?&nbsp; Because you often learn</div>
<div style="position:absolute;left:41px;top:191.3px;width:587.3px;font:italic 20.5px/20.5px 'Liberation Serif',serif;color:#222;white-space:nowrap;-webkit-text-stroke:.7px #222;text-align:justify;text-align-last:left;transform-origin:0 50%;transform:scaleX(0.79);">&nbsp;more from extreme events.</div>
<div style="position:absolute;left:41px;top:226.1px;width:587.3px;font:italic 20.5px/20.5px 'Liberation Serif',serif;color:#222;white-space:nowrap;-webkit-text-stroke:.7px #222;text-align:justify;text-align-last:justify;transform-origin:0 50%;transform:scaleX(0.79);">•Particular attention is directed towards recent developments</div>
<div style="position:absolute;left:41px;top:251.3px;width:587.3px;font:italic 20.5px/20.5px 'Liberation Serif',serif;color:#222;white-space:nowrap;-webkit-text-stroke:.7px #222;text-align:justify;text-align-last:left;transform-origin:0 50%;transform:scaleX(0.79);">&nbsp;in the energy and metals markets.</div>
<div style="position:absolute;left:41px;top:286.1px;width:587.3px;font:italic 20.5px/20.5px 'Liberation Serif',serif;color:#222;white-space:nowrap;-webkit-text-stroke:.7px #222;text-align:justify;text-align-last:justify;transform-origin:0 50%;transform:scaleX(0.79);">•These developments illustrate the importance of funding</div>
<div style="position:absolute;left:41px;top:311.3px;width:587.3px;font:italic 20.5px/20.5px 'Liberation Serif',serif;color:#222;white-space:nowrap;-webkit-text-stroke:.7px #222;text-align:justify;text-align-last:justify;transform-origin:0 50%;transform:scaleX(0.79);">&nbsp;liquidity for the market liquidity of commodity markets</div>
<div style="position:absolute;left:41px;top:336.5px;width:587.3px;font:italic 20.5px/20.5px 'Liberation Serif',serif;color:#222;white-space:nowrap;-webkit-text-stroke:.7px #222;text-align:justify;text-align-last:left;transform-origin:0 50%;transform:scaleX(0.79);">&nbsp;among other factors.</div>
<div style="position:absolute;left:40.0px;top:388.0px;width:45.0px;height:2.0px;background:#d8d8d8;"></div>
<div style="position:absolute;left:215.0px;top:388.0px;width:55.0px;height:2.0px;background:#d8d8d8;"></div>
</div>
<span class="t" style="left:4.6px;top:266.4px;font-size:8.4px;line-height:8.4px;color:#555;font-family:'Liberation Sans',sans-serif;transform-origin:0 50%;transform:scaleX(0.771);">3</span>
<div style="position:absolute;left:15.8px;top:265.0px;width:96.0px;height:71.0px;background:#fff;border-radius:2px;box-shadow:0 0 2px rgba(0,0,0,.10);"></div>
<div style="position:absolute;left:15.8px;top:265px;width:544px;height:402.0px;overflow:hidden;transform-origin:0 0;transform:scale(0.1765);"><span class="t" style="left:40.0px;top:38.5px;font-size:27px;line-height:27px;color:#111;font-family:'Liberation Serif',serif;transform-origin:0 50%;transform:scaleX(0.835);">Cash and Futures Markets</span>
<div style="position:absolute;left:41px;top:112.8px;width:587.3px;font:italic 20.5px/20.5px 'Liberation Serif',serif;color:#222;white-space:nowrap;-webkit-text-stroke:.7px #222;text-align:justify;text-align-last:justify;transform-origin:0 50%;transform:scaleX(0.79);">•Both cash and futures markets contribute to price discovery.</div>
<div style="position:absolute;left:41px;top:136.8px;width:587.3px;font:italic 20.5px/20.5px 'Liberation Serif',serif;color:#222;white-space:nowrap;-webkit-text-stroke:.7px #222;text-align:justify;text-align-last:justify;transform-origin:0 50%;transform:scaleX(0.79);">&nbsp;Futures markets facilitate risk transference, and arbitrage or</div>
<div style="position:absolute;left:41px;top:160.8px;width:587.3px;font:italic 20.5px/20.5px 'Liberation Serif',serif;color:#222;white-space:nowrap;-webkit-text-stroke:.7px #222;text-align:justify;text-align-last:left;transform-origin:0 50%;transform:scaleX(0.79);">&nbsp;the potential for arbitrage keeps prices in line.</div>
<div style="position:absolute;left:41px;top:194.3px;width:587.3px;font:italic 20.5px/20.5px 'Liberation Serif',serif;color:#222;white-space:nowrap;-webkit-text-stroke:.7px #222;text-align:justify;text-align-last:justify;transform-origin:0 50%;transform:scaleX(0.79);">•But what happens to both markets when either the cash or</div>
<div style="position:absolute;left:41px;top:218.3px;width:587.3px;font:italic 20.5px/20.5px 'Liberation Serif',serif;color:#222;white-space:nowrap;-webkit-text-stroke:.7px #222;text-align:justify;text-align-last:left;transform-origin:0 50%;transform:scaleX(0.79);">&nbsp;derivatives market is stressed?</div>
<div style="position:absolute;left:40.0px;top:388.0px;width:45.0px;height:2.0px;background:#d8d8d8;"></div>
<div style="position:absolute;left:215.0px;top:388.0px;width:55.0px;height:2.0px;background:#d8d8d8;"></div>
</div>
<span class="t" style="left:4.6px;top:349.0px;font-size:8.4px;line-height:8.4px;color:#555;font-family:'Liberation Sans',sans-serif;transform-origin:0 50%;transform:scaleX(0.771);">4</span>
<div style="position:absolute;left:15.8px;top:347.6px;width:96.0px;height:71.0px;background:#fff;border-radius:2px;box-shadow:0 0 2px rgba(0,0,0,.10);"></div>
<div style="position:absolute;left:15.8px;top:347.6px;width:544px;height:402.0px;overflow:hidden;transform-origin:0 0;transform:scale(0.1765);"><span class="t" style="left:40.0px;top:24.5px;font-size:27px;line-height:27px;color:#111;font-family:'Liberation Serif',serif;transform-origin:0 50%;transform:scaleX(0.905);">Market Stressors</span>
<div style="position:absolute;left:41px;top:79.8px;width:587.3px;font:italic 20.5px/20.5px 'Liberation Serif',serif;color:#222;white-space:nowrap;-webkit-text-stroke:.7px #222;text-align:justify;text-align-last:justify;transform-origin:0 50%;transform:scaleX(0.79);">•Problems in the cash markets may create volatility that</div>
<div style="position:absolute;left:41px;top:105.5px;width:587.3px;font:italic 20.5px/20.5px 'Liberation Serif',serif;color:#222;white-space:nowrap;-webkit-text-stroke:.7px #222;text-align:justify;text-align-last:justify;transform-origin:0 50%;transform:scaleX(0.79);">&nbsp;impacts both spot and futures prices. Higher volatility means</div>
<div style="position:absolute;left:41px;top:131.3px;width:587.3px;font:italic 20.5px/20.5px 'Liberation Serif',serif;color:#222;white-space:nowrap;-webkit-text-stroke:.7px #222;text-align:justify;text-align-last:justify;transform-origin:0 50%;transform:scaleX(0.79);">&nbsp;a higher probability of large price changes which induces</div>
<div style="position:absolute;left:41px;top:157.2px;width:587.3px;font:italic 20.5px/20.5px 'Liberation Serif',serif;color:#222;white-space:nowrap;-webkit-text-stroke:.7px #222;text-align:justify;text-align-last:justify;transform-origin:0 50%;transform:scaleX(0.79);">&nbsp;higher margin requirements.&nbsp; Higher margin requirements</div>
<div style="position:absolute;left:41px;top:183.0px;width:587.3px;font:italic 20.5px/20.5px 'Liberation Serif',serif;color:#222;white-space:nowrap;-webkit-text-stroke:.7px #222;text-align:justify;text-align-last:justify;transform-origin:0 50%;transform:scaleX(0.79);">&nbsp;affects the cash needs of hedgers and market makers and</div>
<div style="position:absolute;left:41px;top:208.8px;width:587.3px;font:italic 20.5px/20.5px 'Liberation Serif',serif;color:#222;white-space:nowrap;-webkit-text-stroke:.7px #222;text-align:justify;text-align-last:left;transform-origin:0 50%;transform:scaleX(0.79);">&nbsp;makes it more difficult for dealers to hedge positions.</div>
<div style="position:absolute;left:41px;top:244.2px;width:587.3px;font:italic 20.5px/20.5px 'Liberation Serif',serif;color:#222;white-space:nowrap;-webkit-text-stroke:.7px #222;text-align:justify;text-align-last:justify;transform-origin:0 50%;transform:scaleX(0.79);">•This may, in turn, cause funding liquidity problems which</div>
<div style="position:absolute;left:41px;top:270.0px;width:587.3px;font:italic 20.5px/20.5px 'Liberation Serif',serif;color:#222;white-space:nowrap;-webkit-text-stroke:.7px #222;text-align:justify;text-align-last:justify;transform-origin:0 50%;transform:scaleX(0.79);">&nbsp;then affect market liquidity and may spillover to other</div>
<div style="position:absolute;left:41px;top:295.8px;width:587.3px;font:italic 20.5px/20.5px 'Liberation Serif',serif;color:#222;white-space:nowrap;-webkit-text-stroke:.7px #222;text-align:justify;text-align-last:left;transform-origin:0 50%;transform:scaleX(0.79);">&nbsp;markets.</div>
<div style="position:absolute;left:40.0px;top:388.0px;width:45.0px;height:2.0px;background:#d8d8d8;"></div>
<div style="position:absolute;left:215.0px;top:388.0px;width:55.0px;height:2.0px;background:#d8d8d8;"></div>
</div>
<span class="t" style="left:4.6px;top:431.6px;font-size:8.4px;line-height:8.4px;color:#555;font-family:'Liberation Sans',sans-serif;transform-origin:0 50%;transform:scaleX(0.771);">5</span>
<div style="position:absolute;left:15.8px;top:430.2px;width:96.0px;height:71.0px;background:#fff;border-radius:2px;box-shadow:0 0 2px rgba(0,0,0,.10);"></div>
<div style="position:absolute;left:15.8px;top:430.2px;width:544px;height:402.0px;overflow:hidden;transform-origin:0 0;transform:scale(0.1765);"><span class="t" style="left:40.0px;top:30.5px;font-size:27px;line-height:27px;color:#111;font-family:'Liberation Serif',serif;transform-origin:0 50%;transform:scaleX(0.905);">Market Stressors</span>
<div style="position:absolute;left:41px;top:81.8px;width:587.3px;font:20.5px/20.5px 'Liberation Serif',serif;color:#222;white-space:nowrap;-webkit-text-stroke:.7px #222;text-align:justify;text-align-last:justify;transform-origin:0 50%;transform:scaleX(0.79);">•2 scenarios--One is Volatility driven by fundamentals One is</div>
<div style="position:absolute;left:41px;top:107.8px;width:587.3px;font:20.5px/20.5px 'Liberation Serif',serif;color:#222;white-space:nowrap;-webkit-text-stroke:.7px #222;text-align:justify;text-align-last:left;transform-origin:0 50%;transform:scaleX(0.79);">&nbsp;volatility driven by liquidity</div>
<div style="position:absolute;left:41px;top:143.3px;width:587.3px;font:20.5px/20.5px 'Liberation Serif',serif;color:#222;white-space:nowrap;-webkit-text-stroke:.7px #222;text-align:justify;text-align-last:justify;transform-origin:0 50%;transform:scaleX(0.79);">•One: funding liquidity situation is driven by fundamentals the</div>
<div style="position:absolute;left:41px;top:169.3px;width:587.3px;font:20.5px/20.5px 'Liberation Serif',serif;color:#222;white-space:nowrap;-webkit-text-stroke:.7px #222;text-align:justify;text-align-last:justify;transform-origin:0 50%;transform:scaleX(0.79);">&nbsp;other funding liquidity is a self-enforced restraint by the</div>
<div style="position:absolute;left:41px;top:195.3px;width:587.3px;font:20.5px/20.5px 'Liberation Serif',serif;color:#222;white-space:nowrap;-webkit-text-stroke:.7px #222;text-align:justify;text-align-last:left;transform-origin:0 50%;transform:scaleX(0.79);">&nbsp;exchange</div>
<div style="position:absolute;left:41px;top:230.9px;width:587.3px;font:20.5px/20.5px 'Liberation Serif',serif;color:#222;white-space:nowrap;-webkit-text-stroke:.7px #222;text-align:justify;text-align-last:left;transform-origin:0 50%;transform:scaleX(0.79);">•both were resolved</div>
<div style="position:absolute;left:40.0px;top:388.0px;width:45.0px;height:2.0px;background:#d8d8d8;"></div>
<div style="position:absolute;left:215.0px;top:388.0px;width:55.0px;height:2.0px;background:#d8d8d8;"></div>
</div>
<span class="t" style="left:4.6px;top:514.4px;font-size:8.4px;line-height:8.4px;color:#555;font-family:'Liberation Sans',sans-serif;transform-origin:0 50%;transform:scaleX(0.771);">6</span>
<div style="position:absolute;left:15.8px;top:513.0px;width:96.0px;height:17.0px;background:#fff;border-radius:2px;box-shadow:0 0 2px rgba(0,0,0,.10);"></div>
<div style="position:absolute;left:15.8px;top:513px;width:544px;height:96.3px;overflow:hidden;transform-origin:0 0;transform:scale(0.1765);"><span class="t" style="left:40.0px;top:24.5px;font-size:27px;line-height:27px;color:#111;font-family:'Liberation Serif',serif;transform-origin:0 50%;transform:scaleX(0.905);">Market Stressors</span>
<div style="position:absolute;left:41px;top:73.8px;width:587.3px;font:italic 20.5px/20.5px 'Liberation Serif',serif;color:#222;white-space:nowrap;-webkit-text-stroke:.7px #222;text-align:justify;text-align-last:left;transform-origin:0 50%;transform:scaleX(0.79);">•Brunnermeier and Pedersen (2009) discuss the interplay of</div>
<div style="position:absolute;left:40.0px;top:388.0px;width:45.0px;height:2.0px;background:#d8d8d8;"></div>
<div style="position:absolute;left:215.0px;top:388.0px;width:55.0px;height:2.0px;background:#d8d8d8;"></div>
</div>
<div style="position:absolute;left:123.6px;top:93.5px;width:592.4px;height:436.5px;background:#f6f6f6;"></div>
<div style="position:absolute;left:148.0px;top:108.6px;width:545.0px;height:401.4px;background:#fff;box-shadow:0 0 4px rgba(0,0,0,.07);"></div>
<span class="t" style="left:17px;width:800px;text-align:center;top:196px;font-size:29px;line-height:29px;color:#0a0a0a;font-family:'Liberation Serif',serif;font-weight:bold;transform:scaleX(0.781)">The Nexus Between Cash and Futures Markets</span>
<span class="t" style="left:20px;width:800px;text-align:center;top:319px;font-size:23px;line-height:23px;color:#0a0a0a;font-family:'Liberation Serif',serif;transform:scaleX(0.79)">Robert I. Webb</span>
<span class="t" style="left:20px;width:800px;text-align:center;top:346.5px;font-size:23px;line-height:23px;color:#0a0a0a;font-family:'Liberation Serif',serif;transform:scaleX(0.79)">McIntire School of Commerce</span>
<span class="t" style="left:20px;width:800px;text-align:center;top:373px;font-size:23px;line-height:23px;color:#0a0a0a;font-family:'Liberation Serif',serif;transform:scaleX(0.79)">University of Virginia</span>
<span class="t" style="left:20px;width:800px;text-align:center;top:416px;font-size:15px;line-height:15px;color:#0a0a0a;font-family:'Liberation Serif',serif;transform:scaleX(0.82)">©2022</span>
<div style="position:absolute;left:0.0px;top:529.6px;width:716.0px;height:14.4px;background:#efefef;"></div>
<div style="position:absolute;left:0.0px;top:529.4px;width:716.0px;height:1.0px;background:#d9d9d9;"></div>
<span class="t" style="left:58.0px;top:533.6px;font-size:7.6px;line-height:7.6px;color:#7a7a7a;font-family:'Liberation Sans',sans-serif;transform-origin:0 50%;transform:scaleX(0.823);">English (United States)</span>
<svg style="position:absolute;left:131px;top:532px" width="9" height="11" viewBox="0 0 9 11" fill="none" stroke="#6f6f6f" stroke-width=".8"><circle cx="4" cy="2.4" r="1.2"/><path d="M1.2 4.4 H6.8 M4 4.4 V7 M4 7 L2.2 10 M4 7 L5.8 10"/><path d="M5.6 8.6 L6.6 9.8 L8.4 7.4" stroke-width=".7"/></svg>
<span class="t" style="left:140.8px;top:533.6px;font-size:7.6px;line-height:7.6px;color:#6f6f6f;font-family:'Liberation Sans',sans-serif;transform-origin:0 50%;transform:scaleX(0.835);">Accessibility: Investigate</span>
<svg style="position:absolute;left:444px;top:532.5px" width="8" height="10" viewBox="0 0 8 10" fill="none" stroke="#6f6f6f" stroke-width=".9"><path d="M.4 5.2 H7.4 M.4 7.2 H7.4 M.4 9.2 H7.4" stroke-width=".8"/><path d="M2.6 3.4 L3.9 1.2 L5.2 3.4 Z" fill="#6f6f6f" stroke="none"/></svg>
<span class="t" style="left:454.0px;top:533.6px;font-size:7.6px;line-height:7.6px;color:#6f6f6f;font-family:'Liberation Sans',sans-serif;transform-origin:0 50%;transform:scaleX(0.806);">Notes</span>
<svg style="position:absolute;left:479.6px;top:533px" width="8" height="9" viewBox="0 0 8 9"><path d="M.6 .8 H7.2 V5.8 H3.6 L2 7.8 V5.8 H.6 Z" fill="#5e5e5e"/></svg>
<span class="t" style="left:488.8px;top:533.6px;font-size:7.6px;line-height:7.6px;color:#6f6f6f;font-family:'Liberation Sans',sans-serif;transform-origin:0 50%;transform:scaleX(0.817);">Comments</span>
<div style="position:absolute;left:524.8px;top:530.8px;width:17.2px;height:13.2px;background:#b9b9b9;"></div>
<svg style="position:absolute;left:529px;top:532.6px" width="180" height="10" viewBox="0 0 180 10" fill="none" stroke="#666" stroke-width=".9">
<path d="M1.8 .8 H7.4 V9 H1.8 Z" stroke="#fff" fill="#c9c9c9"/><path d="M3.4 3 H5.8 V4.6 H3.4 Z" stroke="#fff" stroke-width=".7"/>
<path d="M18.6 1 H20.8 V3.6 H18.6 Z M22.6 1 H24.8 V3.6 H22.6 Z M18.6 6 H20.8 V8.6 H18.6 Z M22.6 6 H24.8 V8.6 H22.6 Z" fill="#555" stroke="#555" stroke-width=".5"/>
<path d="M36.8 1 H39.4 V8.6 H36.8 Z M40.4 1 H43 V8.6 H40.4 Z" stroke-width=".8"/><path d="M37.6 3 H38.6 M41.2 3 H42.2 M37.6 5 H38.6 M41.2 5 H42.2" stroke-width=".5"/>
<path d="M54.4 1.2 H61.2 V5.8 H54.4 Z M57.8 5.8 V8 M56.2 8.8 L57.8 7.4 L59.4 8.8" stroke-width=".8"/>
<path d="M71.2 5 H74.8" stroke="#333" stroke-width="1.5"/>
<path d="M79 5 H127" stroke="#a9a9a9" stroke-width="1.9"/>
<ellipse cx="103.8" cy="5" rx="4.3" ry="4.6" fill="#fdfdfd" stroke="#d6d6d6" stroke-width=".5"/>
<path d="M131 5 H135.4 M133.2 2.6 V7.4" stroke="#333" stroke-width="1.3"/>
<path d="M168.8 1 H175 V9 H168.8 Z" stroke="#666" stroke-width=".8"/><path d="M170.2 3.6 V2.6 H171 M173.6 3.6 V2.6 H172.8 M170.2 6.4 V7.4 H171 M173.6 6.4 V7.4 H172.8 M171.9 4.2 V5.8 M171.2 5 H172.6" stroke="#666" stroke-width=".6"/>
</svg>
<span class="t" style="left:672.8px;top:533.7px;font-size:7.4px;line-height:7.4px;color:#555;font-family:'Liberation Sans',sans-serif;transform-origin:0 50%;transform:scaleX(0.784);">115%</span>
<div style="position:absolute;left:0.0px;top:532.6px;width:58.0px;height:9.8px;background:#0a0a0a;"></div>
<span class="t" style="left:0.0px;top:533.5px;font-size:7.8px;line-height:7.8px;color:#fff;font-family:'Liberation Sans',sans-serif;transform-origin:0 50%;transform:scaleX(0.759);">obert Webb</span>
<div style="position:absolute;left:31.2px;top:534.2px;width:4.6px;height:6.8px;background:transparent;border:.7px solid #e8e8e8;border-left-width:.9px;"></div>
<div style="position:absolute;left:32.0px;top:536.4px;width:3.2px;height:0.7px;background:#e8e8e8;"></div>
<div style="position:absolute;left:33.3px;top:534.6px;width:0.7px;height:6.0px;background:#d8d8d8;"></div>
<div style="position:absolute;left:36.6px;top:534.2px;width:4.6px;height:6.8px;background:transparent;border:.7px solid #e8e8e8;border-left-width:.9px;"></div>
<div style="position:absolute;left:37.4px;top:536.4px;width:3.2px;height:0.7px;background:#e8e8e8;"></div>
<div style="position:absolute;left:38.7px;top:534.6px;width:0.7px;height:6.0px;background:#d8d8d8;"></div>
<div style="position:absolute;left:42.0px;top:534.2px;width:4.6px;height:6.8px;background:transparent;border:.7px solid #e8e8e8;border-left-width:.9px;"></div>
<div style="position:absolute;left:42.8px;top:536.4px;width:3.2px;height:0.7px;background:#e8e8e8;"></div>
<div style="position:absolute;left:44.1px;top:534.6px;width:0.7px;height:6.0px;background:#d8d8d8;"></div>
<div style="position:absolute;left:47.4px;top:534.2px;width:4.6px;height:6.8px;background:transparent;border:.7px solid #e8e8e8;border-left-width:.9px;"></div>
<div style="position:absolute;left:48.2px;top:536.4px;width:3.2px;height:0.7px;background:#e8e8e8;"></div>
<div style="position:absolute;left:49.5px;top:534.6px;width:0.7px;height:6.0px;background:#d8d8d8;"></div>
<div style="position:absolute;left:52.8px;top:534.2px;width:4.6px;height:6.8px;background:transparent;border:.7px solid #e8e8e8;border-left-width:.9px;"></div>
<div style="position:absolute;left:53.6px;top:536.4px;width:3.2px;height:0.7px;background:#e8e8e8;"></div>
<div style="position:absolute;left:54.9px;top:534.6px;width:0.7px;height:6.0px;background:#d8d8d8;"></div>
<svg style="position:absolute;left:600.6px;top:538px" width="6" height="9" viewBox="0 0 6 9"><path d="M.6 .4 V7.2 L2.2 5.8 L3.4 8.4 L4.4 8 L3.2 5.4 H5.2 Z" fill="#111" stroke="#fff" stroke-width=".5"/></svg>
<svg style="position:absolute;left:796px;top:0px" width="36" height="36" viewBox="0 0 36 36">
<defs><clipPath id="av1"><ellipse cx="18" cy="12.4" rx="16.8" ry="22.6"/></clipPath></defs>
<g clip-path="url(#av1)">
<rect x="0" y="-12" width="36" height="48" fill="#efe2d5"/>
<path d="M0 -12 H14 L8 8 L4 22 L0 26 Z" fill="#7fb86a"/>
<path d="M2 -2 L9 -2 L8 6 L3 9 Z" fill="#9fc4e6"/>
<path d="M3 14 L9 10 L10 18 L5 24 Z" fill="#5fa352"/>
<path d="M13 -12 H19 L15 6 L10 16 L8 12 Z" fill="#4a3326"/>
<path d="M18 -12 H30 L31 2 L26 6 L20 4 Z" fill="#6b5646"/>
<path d="M20 2 L23 2 L18 22 L15 26 L16 14 Z" fill="#8b86c9" opacity=".75"/>
<path d="M27 -6 L32 -4 L33 8 L29 10 Z" fill="#8fb0dc" opacity=".8"/>
<path d="M9 18 L14 12 L16 20 L15 30 L9 32 L4 26 Z" fill="#d9b79b"/>
<path d="M4 27 L10 30 L16 34 L8 36 Z" fill="#86b870"/>
<path d="M16 18 L18 18 L17 28 L15 28 Z" fill="#e05a7a" opacity=".8"/>
<path d="M18 6 L30 8 L33 20 L26 32 L18 34 Z" fill="#f1e6dd"/>
</g></svg>
<span class="t" style="left:734.0px;top:64.3px;font-size:8.2px;line-height:8.2px;color:#ededed;font-family:'Liberation Sans',sans-serif;transform-origin:0 50%;transform:scaleX(0.757);">2022ICDCM Staff</span>
<svg style="position:absolute;left:796px;top:120px" width="36" height="46" viewBox="0 0 36 46">
<defs><clipPath id="av2"><ellipse cx="18" cy="23.2" rx="16.9" ry="22.4"/></clipPath></defs>
<g clip-path="url(#av2)"><rect width="36" height="46" fill="#dedede"/>
<ellipse cx="18.4" cy="18.6" rx="8" ry="10.6" fill="#b3b3b3"/>
<path d="M13.8 26 H23.2 V31 C26 33 27.4 35 27.6 46 H9.6 C9.8 35 11 33 13.8 31 Z" fill="#b3b3b3"/>
</g></svg>
<span class="t" style="left:733.8px;top:194.9px;font-size:8.2px;line-height:8.2px;color:#ededed;font-family:'Liberation Sans',sans-serif;transform-origin:0 50%;transform:scaleX(0.751);">Xiaoping Song_U of M</span>
<svg style="position:absolute;left:731px;top:212.3px;" width="167" height="122.4" viewBox="14 20 771 565" preserveAspectRatio="none">
<defs><linearGradient id="cur" x1="0" x2="1"><stop offset="0" stop-color="#3b4058"/><stop offset=".35" stop-color="#5b6079"/><stop offset=".6" stop-color="#454a62"/><stop offset="1" stop-color="#555a72"/></linearGradient>
<filter id="bl1" x="-5%" y="-5%" width="110%" height="110%"><feGaussianBlur stdDeviation="3"/></filter></defs>
<rect x="14" y="20" width="771" height="565" fill="#e7ebef"/>
<g filter="url(#bl1)">
<rect x="14" y="20" width="225" height="565" fill="#e9edf1"/>
<rect x="330" y="20" width="325" height="470" fill="#eef2f4"/>
<path d="M490 300 L530 292 L560 300 L600 285 L650 290 V465 L560 430 L490 400 Z" fill="#b7c8d2"/>
<path d="M490 400 L650 465 V490 H490 Z" fill="#c9d5dc"/>
<rect x="235" y="20" width="110" height="420" fill="url(#cur)"/>
<rect x="650" y="20" width="135" height="565" fill="#f2f0ee"/>
<rect x="668" y="84" width="117" height="278" fill="#e8cbac"/>
<rect x="686" y="98" width="99" height="80" fill="#f1e5e6"/><rect x="686" y="192" width="99" height="72" fill="#f1e5e6"/><rect x="686" y="278" width="99" height="72" fill="#f1e5e6"/>
<path d="M730 232 L742 228 L746 240 L760 242 L758 264 L750 264 L750 254 L740 254 L740 264 L732 264 Z" fill="#d8303c"/>
<rect x="656" y="362" width="129" height="140" fill="#f5f4f3"/>
<rect x="706" y="370" width="10" height="28" rx="3" fill="#555"/>
<rect x="656" y="500" width="129" height="14" fill="#e0ba8e"/>
<rect x="656" y="514" width="129" height="71" fill="#f3f1ef"/>
<ellipse cx="738" cy="22" rx="50" ry="15" fill="#7b4a2b"/>
<!-- desk + items -->
<rect x="186" y="366" width="50" height="74" fill="#f6f6f6"/>
<rect x="150" y="430" width="86" height="52" fill="#eef0f3"/>
<path d="M14 528 L170 502 V585 H14 Z" fill="#e9d3b1"/>
<rect x="134" y="480" width="26" height="26" fill="#4a464a"/>
<!-- plant -->
<path d="M50 470 H110 L104 535 H56 Z" fill="#5b5661"/>
<path d="M80 470 C60 440 40 430 28 470 C50 450 66 456 80 470 Z M82 468 C70 420 50 392 42 384 C70 398 88 430 88 466 Z M86 466 C96 420 112 408 132 412 C112 424 100 440 92 468 Z M88 468 C110 440 130 436 140 448 C120 448 104 456 90 472 Z M82 470 C74 440 80 412 98 396 C94 420 92 446 88 470 Z M84 470 C60 452 44 452 30 462 C52 458 70 464 84 474 Z M86 470 C100 450 124 446 138 470 C120 458 104 460 90 474 Z M84 466 C80 430 66 410 56 404 C78 412 90 440 90 466 Z M88 464 C104 436 116 430 126 432 C110 442 100 454 92 468 Z" fill="#3f8f3d"/><ellipse cx="84" cy="450" rx="30" ry="24" fill="#4a9a44" fill-opacity=".7"/>
</g>
<!-- person -->
<g filter="url(#bl1)">
<path d="M165 585 L182 480 Q200 430 262 415 L330 400 L480 398 L560 430 Q640 460 655 520 L668 585 Z" fill="#15151a"/>
<path d="M345 585 L350 470 L420 505 L492 455 L500 585 Z" fill="#efefee"/>
<path d="M340 400 L345 470 L420 515 L495 460 L490 395 Z" fill="#dcb6a3"/>
<ellipse cx="407" cy="150" rx="110" ry="124" fill="#1c1b21"/><path d="M496 190 C532 210 534 290 512 330 L498 300 Z" fill="#1c1b21"/><path d="M292 200 C286 240 290 270 300 300 L308 260 Z" fill="#1c1b21"/>
<path d="M303 250 C303 170 335 122 410 120 C482 122 514 170 514 250 C514 345 480 450 410 450 C340 450 303 345 303 250 Z" fill="#e5c5b6"/>
<path d="M296 262 C288 200 300 150 342 112 C380 92 450 92 490 122 C516 158 520 200 518 236 C510 196 496 152 464 130 C428 112 380 114 348 134 C318 164 310 214 306 262 Z" fill="#1c1b21"/>
<ellipse cx="392" cy="373" rx="28" ry="10" fill="#d3606b"/>
<rect x="298" y="228" width="86" height="66" rx="14" fill="#8a8794" fill-opacity=".14" stroke="#2c2c33" stroke-width="6"/>
<rect x="408" y="220" width="92" height="66" rx="14" fill="#8a8794" fill-opacity=".14" stroke="#2c2c33" stroke-width="6"/>
<path d="M384 248 H408 M500 236 L520 226 M298 246 L288 240" stroke="#2c2c33" stroke-width="6"/>
</g>
<rect x="22" y="540" width="242" height="41" fill="#080808"/>
</svg>
<span class="t" style="left:733.8px;top:325.5px;font-size:8.2px;line-height:8.2px;color:#fff;font-family:'Liberation Sans',sans-serif;transform-origin:0 50%;transform:scaleX(0.751);">Qunzi Zhang SDU</span>
<svg style="position:absolute;left:731px;top:343px;" width="167" height="122.7" viewBox="14 18 771 567" preserveAspectRatio="none">
<defs>
<linearGradient id="g2bot" x1="0" x2="1"><stop offset="0" stop-color="#1852c8"/><stop offset=".45" stop-color="#3f4abc"/><stop offset=".75" stop-color="#6f42ac"/><stop offset="1" stop-color="#8c3fa4"/></linearGradient>
<linearGradient id="g2top" x1="0" x2="1"><stop offset="0" stop-color="#6b3ea8"/><stop offset=".4" stop-color="#8f3fa2"/><stop offset=".75" stop-color="#c2449a"/><stop offset="1" stop-color="#e04a8c"/></linearGradient>
<linearGradient id="g2m" x1="0" y1="0" x2="0" y2="1"><stop offset="0" stop-color="#fff"/><stop offset=".25" stop-color="#bbb"/><stop offset=".5" stop-color="#555"/><stop offset=".8" stop-color="#111"/><stop offset="1" stop-color="#000"/></linearGradient>
<radialGradient id="g2l" cx="0" cy=".62" r=".55"><stop offset="0" stop-color="#1a52c8" stop-opacity=".75"/><stop offset="1" stop-color="#1a52c8" stop-opacity="0"/></radialGradient>
<radialGradient id="g2r" cx="1" cy=".15" r=".6"><stop offset="0" stop-color="#e04a8c" stop-opacity=".55"/><stop offset="1" stop-color="#e04a8c" stop-opacity="0"/></radialGradient>
<mask id="mk2" maskUnits="userSpaceOnUse" x="14" y="18" width="771" height="567"><rect x="14" y="18" width="771" height="567" fill="url(#g2m)"/></mask>
<filter id="bl2" x="-5%" y="-5%" width="110%" height="110%"><feGaussianBlur stdDeviation="3"/></filter></defs>
<rect x="14" y="18" width="771" height="567" fill="url(#g2bot)"/>
<rect x="14" y="18" width="771" height="567" fill="url(#g2top)" mask="url(#mk2)"/>
<rect x="14" y="18" width="771" height="567" fill="url(#g2l)"/>
<rect x="14" y="18" width="771" height="567" fill="url(#g2r)"/>
<!-- watermark shield -->
<g fill="none" stroke="#fff" stroke-opacity=".05" stroke-width="10">
<path d="M545 120 C600 90 700 90 770 120 V380 C740 470 690 520 655 545 C610 520 560 470 545 380 Z"/>
<path d="M600 170 V330 M650 150 V340 M700 170 V330 M580 250 H730"/>
</g>
<text x="616" y="438" font-family="Liberation Sans, sans-serif" font-size="72" fill="#fff" fill-opacity=".13" textLength="150" lengthAdjust="spacingAndGlyphs">1895</text>
<!-- logos -->
<g fill="none" stroke="#fff" stroke-opacity=".82" stroke-width="4.2">
<circle cx="270" cy="72" r="14" stroke-width="3.5"/><circle cx="270" cy="72" r="6" fill="#fff" fill-opacity=".6" stroke="none"/>
<path d="M292 65.2 H307 M299.5 58 V82 M293.5 82 L299.5 68.8 L305.5 82 M294.25 72.88 H304.75"/><path d="M312 65.2 H327 M319.5 58 V82 M313.5 82 L319.5 68.8 L325.5 82 M314.25 72.88 H324.75"/><path d="M332 65.2 H347 M339.5 58 V82 M333.5 82 L339.5 68.8 L345.5 82 M334.25 72.88 H344.75"/><path d="M352 65.2 H367 M359.5 58 V82 M353.5 82 L359.5 68.8 L365.5 82 M354.25 72.88 H364.75"/><path d="M292 93 H370" stroke-opacity=".5" stroke-width="5"/>
<path d="M398 55 V101" stroke-opacity=".4" stroke-width="2.5"/>
<path d="M440 58 L452 74 L440 92 L428 74 Z" fill="#fff" fill-opacity=".55" stroke-width="2.5"/>
<path d="M462 66.6 H477 M469.5 60 V82 M463.5 82 L469.5 69.9 L475.5 82 M464.25 73.64 H474.75"/><path d="M482 66.6 H497 M489.5 60 V82 M483.5 82 L489.5 69.9 L495.5 82 M484.25 73.64 H494.75"/><path d="M502 66.6 H517 M509.5 60 V82 M503.5 82 L509.5 69.9 L515.5 82 M504.25 73.64 H514.75"/><path d="M522 66.6 H537 M529.5 60 V82 M523.5 82 L529.5 69.9 L535.5 82 M524.25 73.64 H534.75"/><path d="M462 93 H536" stroke-opacity=".45" stroke-width="4"/>
</g>
<g filter="url(#bl2)">
<!-- shirt -->
<path d="M168 585 L215 520 Q250 470 330 445 L500 442 Q590 470 640 520 L712 585 Z" fill="#e2e7f2"/>
<path d="M345 470 L420 560 L495 465 L500 585 H340 Z" fill="#d6deec"/>
<!-- neck/face -->
<path d="M362 430 L368 500 L425 560 L480 495 L480 425 Z" fill="#d3a78d"/>
<ellipse cx="349" cy="335" rx="12" ry="28" fill="#d3a58c"/><ellipse cx="491" cy="335" rx="12" ry="28" fill="#d3a58c"/>
<path d="M344 300 C344 240 370 208 420 206 C472 208 497 240 496 300 C497 360 492 410 470 440 C455 458 440 464 420 464 C400 464 385 458 370 440 C348 410 343 360 344 300 Z" fill="#dfb9a2"/>
<path d="M342 318 C334 240 360 190 420 186 C482 190 508 240 498 320 C492 286 486 270 472 258 C440 246 400 246 370 258 C356 270 350 288 342 318 Z" fill="#505358"/><path d="M356 222 C380 188 460 186 486 222 C455 204 392 204 356 222 Z" fill="#85888c"/>
<path d="M365 352 H400 M432 352 H470" stroke="#5b4034" stroke-width="5" stroke-opacity=".7"/>
<path d="M395 440 Q420 450 447 440" stroke="#b57a6a" stroke-width="5" fill="none"/>
</g>
<rect x="25" y="538" width="58" height="40" fill="#0c0c0c" fill-opacity=".9"/>
<g fill="none" stroke="#f2f2f2" stroke-width="3">
<path d="M31 546 H50 V572 H31 Z M31 556 H50 M31 564 H50 M40 546 V572"/>
<path d="M57 546 H77 V572 H57 Z M57 556 H77 M67 546 V572 M57 564 H77"/>
</g>
</svg>
<svg style="position:absolute;left:731px;top:473.2px;" width="167" height="123.1" viewBox="14 15 771 568" preserveAspectRatio="none">
<defs><filter id="bl3" x="-5%" y="-5%" width="110%" height="110%"><feGaussianBlur stdDeviation="2.4"/></filter>
<filter id="bl3b" x="-5%" y="-5%" width="110%" height="110%"><feGaussianBlur stdDeviation="3"/></filter></defs>
<rect x="14" y="15" width="771" height="568" fill="#e7dfcc"/>
<g filter="url(#bl3)">
<!-- left door / cabinet -->
<rect x="14" y="15" width="140" height="568" fill="#e9e3d2"/>
<rect x="18" y="20" width="52" height="290" fill="#cfc6ae"/>
<rect x="20" y="80" width="46" height="40" fill="#8a7a60"/><rect x="20" y="130" width="46" height="36" fill="#efe9d8"/><rect x="20" y="176" width="46" height="40" fill="#a89a80"/><rect x="20" y="226" width="46" height="70" fill="#e4dcc6"/>
<rect x="48" y="20" width="20" height="22" fill="#4a4236"/>
<rect x="18" y="310" width="52" height="232" fill="#2b2321"/>
<rect x="94" y="24" width="12" height="50" fill="#6a5e4a"/><rect x="112" y="40" width="12" height="50" fill="#6a5e4a"/><rect x="128" y="56" width="10" height="48" fill="#6a5e4a"/>
<g fill="#94825e"><rect x="96" y="132" width="12" height="80"/><rect x="112" y="140" width="12" height="78"/><rect x="127" y="150" width="10" height="74"/>
<rect x="96" y="228" width="12" height="76"/><rect x="112" y="232" width="12" height="74"/><rect x="127" y="238" width="10" height="70"/>
<rect x="96" y="318" width="12" height="76"/><rect x="112" y="320" width="12" height="74"/><rect x="127" y="324" width="10" height="70"/>
<rect x="96" y="406" width="12" height="84"/><rect x="112" y="406" width="12" height="84"/><rect x="127" y="406" width="10" height="80"/></g>
<rect x="150" y="15" width="6" height="480" fill="#d4ccb8"/>
<!-- wall -->
<rect x="156" y="15" width="186" height="568" fill="#e8e0cc"/>
<!-- bookshelf -->
<rect x="340" y="24" width="408" height="396" fill="#f1eee6"/>
<rect x="350" y="40" width="125" height="52" fill="#e9e5db"/><rect x="352" y="42" width="7" height="50" fill="#bdb6aa"/><rect x="359" y="52" width="10" height="40" fill="#857b74"/><rect x="369" y="48" width="5" height="44" fill="#7a6f6a"/><rect x="374" y="50" width="9" height="42" fill="#7e4444"/><rect x="383" y="48" width="8" height="44" fill="#5e6674"/><rect x="391" y="46" width="5" height="46" fill="#7a6f6a"/><rect x="396" y="51" width="9" height="41" fill="#5e6674"/><rect x="405" y="45" width="10" height="47" fill="#7a6f6a"/><rect x="415" y="46" width="9" height="46" fill="#7a6f6a"/><rect x="424" y="52" width="6" height="40" fill="#9a8e80"/><rect x="430" y="48" width="7" height="44" fill="#857b74"/><rect x="437" y="46" width="5" height="46" fill="#857b74"/><rect x="442" y="50" width="10" height="42" fill="#4a4248"/><rect x="452" y="45" width="9" height="47" fill="#444a54"/><rect x="461" y="46" width="5" height="46" fill="#7e4444"/><rect x="466" y="52" width="7" height="40" fill="#94524a"/><rect x="350" y="106" width="125" height="54" fill="#e9e5db"/><rect x="352" y="111" width="8" height="49" fill="#6e6864"/><rect x="360" y="113" width="7" height="47" fill="#5a4a48"/><rect x="367" y="115" width="7" height="45" fill="#3a363a"/><rect x="374" y="110" width="10" height="50" fill="#7e4444"/><rect x="384" y="115" width="9" height="45" fill="#3e3a40"/><rect x="393" y="110" width="7" height="50" fill="#634b42"/><rect x="400" y="107" width="9" height="53" fill="#4e5a70"/><rect x="409" y="114" width="9" height="46" fill="#9c4440"/><rect x="418" y="108" width="6" height="52" fill="#6e6864"/><rect x="424" y="108" width="5" height="52" fill="#7e4444"/><rect x="429" y="112" width="9" height="48" fill="#9c4440"/><rect x="438" y="111" width="7" height="49" fill="#3e3a40"/><rect x="445" y="109" width="9" height="51" fill="#7e4444"/><rect x="454" y="108" width="5" height="52" fill="#3e3a40"/><rect x="459" y="111" width="10" height="49" fill="#7a6f6a"/><rect x="469" y="111" width="4" height="49" fill="#4a4248"/><rect x="350" y="174" width="125" height="54" fill="#e9e5db"/><rect x="352" y="177" width="10" height="51" fill="#634b42"/><rect x="362" y="182" width="10" height="46" fill="#444a54"/><rect x="372" y="176" width="5" height="52" fill="#444a54"/><rect x="377" y="180" width="6" height="48" fill="#3e3a40"/><rect x="383" y="184" width="5" height="44" fill="#634b42"/><rect x="388" y="178" width="6" height="50" fill="#bdb6aa"/><rect x="394" y="176" width="8" height="52" fill="#3e3a40"/><rect x="402" y="185" width="5" height="43" fill="#bdb6aa"/><rect x="407" y="184" width="9" height="44" fill="#9a8e80"/><rect x="416" y="177" width="8" height="51" fill="#d4ccbe"/><rect x="424" y="182" width="10" height="46" fill="#444a54"/><rect x="434" y="176" width="10" height="52" fill="#5e6674"/><rect x="444" y="186" width="6" height="42" fill="#9a8e80"/><rect x="450" y="179" width="6" height="49" fill="#4b3f44"/><rect x="456" y="177" width="8" height="51" fill="#3a363a"/><rect x="464" y="184" width="7" height="44" fill="#9a8e80"/><rect x="350" y="250" width="125" height="82" fill="#e9e5db"/><rect x="352" y="277" width="8" height="55" fill="#4a4248"/><rect x="360" y="266" width="7" height="66" fill="#5e545c"/><rect x="367" y="274" width="9" height="58" fill="#7a6f6a"/><rect x="376" y="267" width="8" height="65" fill="#857b74"/><rect x="384" y="281" width="8" height="51" fill="#bdb6aa"/><rect x="392" y="278" width="5" height="54" fill="#bdb6aa"/><rect x="397" y="286" width="5" height="46" fill="#94524a"/><rect x="402" y="287" width="8" height="45" fill="#9c4440"/><rect x="410" y="290" width="9" height="42" fill="#4b3f44"/><rect x="419" y="287" width="9" height="45" fill="#4e5a70"/><rect x="428" y="275" width="7" height="57" fill="#7e4444"/><rect x="435" y="275" width="6" height="57" fill="#9a8e80"/><rect x="441" y="284" width="10" height="48" fill="#444a54"/><rect x="451" y="281" width="9" height="51" fill="#4e5a70"/><rect x="460" y="269" width="5" height="63" fill="#5a4a48"/><rect x="465" y="278" width="8" height="54" fill="#7e4444"/><rect x="350" y="346" width="125" height="66" fill="#e9e5db"/><rect x="352" y="382" width="6" height="30" fill="#d2cdc0"/><rect x="358" y="364" width="10" height="48" fill="#a8a396"/><rect x="368" y="369" width="9" height="43" fill="#8e887c"/><rect x="377" y="367" width="7" height="45" fill="#d2cdc0"/><rect x="384" y="369" width="9" height="43" fill="#6a6a62"/><rect x="393" y="372" width="9" height="40" fill="#6a6a62"/><rect x="402" y="367" width="9" height="45" fill="#a8a396"/><rect x="411" y="376" width="10" height="36" fill="#7c7a70"/><rect x="421" y="376" width="10" height="36" fill="#6a6a62"/><rect x="431" y="368" width="6" height="44" fill="#bcb7aa"/><rect x="437" y="383" width="10" height="29" fill="#8e887c"/><rect x="447" y="376" width="6" height="36" fill="#a8a396"/><rect x="453" y="380" width="9" height="32" fill="#d2cdc0"/><rect x="462" y="368" width="10" height="44" fill="#bcb7aa"/><rect x="485" y="40" width="123" height="52" fill="#e9e5db"/><rect x="487" y="47" width="6" height="45" fill="#3a363a"/><rect x="493" y="43" width="8" height="49" fill="#9c4440"/><rect x="501" y="43" width="5" height="49" fill="#bdb6aa"/><rect x="506" y="48" width="8" height="44" fill="#7e4444"/><rect x="514" y="51" width="10" height="41" fill="#9a8e80"/><rect x="524" y="51" width="5" height="41" fill="#5a4a48"/><rect x="529" y="51" width="10" height="41" fill="#3e3a40"/><rect x="539" y="42" width="10" height="50" fill="#9a8e80"/><rect x="549" y="46" width="9" height="46" fill="#4b3f44"/><rect x="558" y="43" width="5" height="49" fill="#4e5a70"/><rect x="563" y="44" width="9" height="48" fill="#9a8e80"/><rect x="572" y="41" width="8" height="51" fill="#94524a"/><rect x="580" y="52" width="6" height="40" fill="#94524a"/><rect x="586" y="47" width="7" height="45" fill="#4a4248"/><rect x="593" y="50" width="7" height="42" fill="#6e6864"/><rect x="600" y="52" width="6" height="40" fill="#444a54"/><rect x="485" y="106" width="123" height="54" fill="#e9e5db"/><rect x="487" y="111" width="8" height="49" fill="#5e545c"/><rect x="495" y="109" width="8" height="51" fill="#5e545c"/><rect x="503" y="113" width="6" height="47" fill="#5e545c"/><rect x="509" y="119" width="9" height="41" fill="#5a4a48"/><rect x="518" y="112" width="6" height="48" fill="#9a8e80"/><rect x="524" y="117" width="6" height="43" fill="#4e5a70"/><rect x="530" y="118" width="9" height="42" fill="#5e545c"/><rect x="539" y="112" width="9" height="48" fill="#4e5a70"/><rect x="548" y="118" width="9" height="42" fill="#94524a"/><rect x="557" y="118" width="7" height="42" fill="#4e5a70"/><rect x="564" y="114" width="9" height="46" fill="#4b3f44"/><rect x="573" y="114" width="5" height="46" fill="#5e545c"/><rect x="578" y="113" width="9" height="47" fill="#d4ccbe"/><rect x="587" y="113" width="8" height="47" fill="#3e3a40"/><rect x="595" y="108" width="9" height="52" fill="#5e545c"/><rect x="485" y="174" width="123" height="54" fill="#e9e5db"/><rect x="487" y="176" width="7" height="52" fill="#94524a"/><rect x="494" y="185" width="8" height="43" fill="#4e5a70"/><rect x="502" y="182" width="8" height="46" fill="#7e4444"/><rect x="510" y="184" width="10" height="44" fill="#7e4444"/><rect x="520" y="179" width="6" height="49" fill="#4e5a70"/><rect x="526" y="176" width="6" height="52" fill="#444a54"/><rect x="532" y="184" width="6" height="44" fill="#9a8e80"/><rect x="538" y="184" width="8" height="44" fill="#4e5a70"/><rect x="546" y="176" width="8" height="52" fill="#3a363a"/><rect x="554" y="177" width="10" height="51" fill="#3a363a"/><rect x="485" y="250" width="123" height="82" fill="#e9e5db"/><rect x="487" y="280" width="10" height="52" fill="#5e545c"/><rect x="497" y="282" width="8" height="50" fill="#94524a"/><rect x="505" y="283" width="7" height="49" fill="#444a54"/><rect x="512" y="282" width="5" height="50" fill="#5a4a48"/><rect x="517" y="273" width="8" height="59" fill="#bdb6aa"/><rect x="525" y="277" width="7" height="55" fill="#634b42"/><rect x="532" y="266" width="9" height="66" fill="#4e5a70"/><rect x="541" y="266" width="6" height="66" fill="#4e5a70"/><rect x="547" y="284" width="5" height="48" fill="#7a6f6a"/><rect x="552" y="284" width="6" height="48" fill="#9a8e80"/><rect x="558" y="269" width="8" height="63" fill="#d4ccbe"/><rect x="566" y="287" width="8" height="45" fill="#5e545c"/><rect x="574" y="278" width="9" height="54" fill="#9c4440"/><rect x="583" y="284" width="5" height="48" fill="#3a363a"/><rect x="588" y="268" width="8" height="64" fill="#d4ccbe"/><rect x="596" y="274" width="5" height="58" fill="#d4ccbe"/><rect x="601" y="275" width="5" height="57" fill="#5e6674"/><rect x="485" y="346" width="123" height="66" fill="#e9e5db"/><rect x="487" y="389" width="5" height="23" fill="#bcb7aa"/><rect x="492" y="385" width="9" height="27" fill="#7c7a70"/><rect x="501" y="382" width="9" height="30" fill="#a8a396"/><rect x="510" y="381" width="6" height="31" fill="#d2cdc0"/><rect x="516" y="384" width="6" height="28" fill="#d2cdc0"/><rect x="522" y="388" width="7" height="24" fill="#8e887c"/><rect x="529" y="376" width="10" height="36" fill="#7c7a70"/><rect x="539" y="376" width="8" height="36" fill="#d2cdc0"/><rect x="547" y="383" width="8" height="29" fill="#d2cdc0"/><rect x="555" y="363" width="6" height="49" fill="#bcb7aa"/><rect x="561" y="372" width="5" height="40" fill="#8e887c"/><rect x="566" y="371" width="7" height="41" fill="#8e887c"/><rect x="573" y="383" width="8" height="29" fill="#7c7a70"/><rect x="581" y="382" width="7" height="30" fill="#a8a396"/><rect x="588" y="380" width="5" height="32" fill="#7c7a70"/><rect x="593" y="379" width="5" height="33" fill="#a8a396"/><rect x="598" y="382" width="5" height="30" fill="#bcb7aa"/><rect x="603" y="387" width="3" height="25" fill="#8e887c"/><rect x="618" y="40" width="122" height="52" fill="#e9e5db"/><rect x="620" y="51" width="5" height="41" fill="#4a4248"/><rect x="625" y="48" width="5" height="44" fill="#634b42"/><rect x="630" y="45" width="7" height="47" fill="#7e4444"/><rect x="637" y="42" width="9" height="50" fill="#9a8e80"/><rect x="646" y="42" width="10" height="50" fill="#bdb6aa"/><rect x="656" y="44" width="7" height="48" fill="#3e3a40"/><rect x="663" y="49" width="6" height="43" fill="#9a8e80"/><rect x="669" y="43" width="5" height="49" fill="#5e545c"/><rect x="674" y="48" width="10" height="44" fill="#5e545c"/><rect x="684" y="42" width="6" height="50" fill="#5e545c"/><rect x="690" y="43" width="9" height="49" fill="#4b3f44"/><rect x="699" y="46" width="10" height="46" fill="#5e6674"/><rect x="709" y="52" width="5" height="40" fill="#9a8e80"/><rect x="714" y="48" width="10" height="44" fill="#4e5a70"/><rect x="724" y="43" width="8" height="49" fill="#857b74"/><rect x="732" y="45" width="5" height="47" fill="#857b74"/><rect x="618" y="106" width="122" height="54" fill="#e9e5db"/><rect x="620" y="116" width="10" height="44" fill="#d4ccbe"/><rect x="630" y="114" width="5" height="46" fill="#7e4444"/><rect x="635" y="108" width="10" height="52" fill="#857b74"/><rect x="645" y="111" width="5" height="49" fill="#7e4444"/><rect x="650" y="110" width="10" height="50" fill="#d4ccbe"/><rect x="660" y="109" width="5" height="51" fill="#5e6674"/><rect x="665" y="110" width="10" height="50" fill="#5e6674"/><rect x="675" y="111" width="10" height="49" fill="#5a4a48"/><rect x="685" y="109" width="8" height="51" fill="#7e4444"/><rect x="693" y="108" width="8" height="52" fill="#634b42"/><rect x="701" y="112" width="5" height="48" fill="#94524a"/><rect x="706" y="112" width="5" height="48" fill="#9c4440"/><rect x="711" y="111" width="7" height="49" fill="#634b42"/><rect x="718" y="112" width="9" height="48" fill="#4b3f44"/><rect x="727" y="118" width="8" height="42" fill="#d4ccbe"/><rect x="735" y="118" width="3" height="42" fill="#94524a"/><rect x="618" y="174" width="122" height="54" fill="#e9e5db"/><rect x="620" y="181" width="10" height="47" fill="#5e545c"/><rect x="630" y="181" width="7" height="47" fill="#5a4a48"/><rect x="637" y="175" width="5" height="53" fill="#857b74"/><rect x="642" y="183" width="6" height="45" fill="#7e4444"/><rect x="648" y="187" width="8" height="41" fill="#5a4a48"/><rect x="656" y="177" width="5" height="51" fill="#5a4a48"/><rect x="661" y="182" width="7" height="46" fill="#94524a"/><rect x="668" y="180" width="5" height="48" fill="#9a8e80"/><rect x="673" y="181" width="10" height="47" fill="#444a54"/><rect x="683" y="180" width="6" height="48" fill="#5e545c"/><rect x="689" y="176" width="7" height="52" fill="#444a54"/><rect x="696" y="181" width="6" height="47" fill="#3e3a40"/><rect x="702" y="187" width="8" height="41" fill="#4b3f44"/><rect x="710" y="179" width="8" height="49" fill="#bdb6aa"/><rect x="718" y="178" width="7" height="50" fill="#6e6864"/><rect x="725" y="182" width="7" height="46" fill="#4e5a70"/><rect x="732" y="187" width="6" height="41" fill="#9c4440"/><rect x="618" y="250" width="122" height="82" fill="#e9e5db"/><rect x="620" y="288" width="8" height="44" fill="#94524a"/><rect x="628" y="291" width="10" height="41" fill="#634b42"/><rect x="638" y="281" width="7" height="51" fill="#bdb6aa"/><rect x="645" y="265" width="8" height="67" fill="#4a4248"/><rect x="653" y="282" width="5" height="50" fill="#6e6864"/><rect x="658" y="269" width="7" height="63" fill="#d4ccbe"/><rect x="665" y="290" width="5" height="42" fill="#634b42"/><rect x="670" y="266" width="10" height="66" fill="#5e6674"/><rect x="680" y="280" width="7" height="52" fill="#9c4440"/><rect x="687" y="271" width="6" height="61" fill="#6e6864"/><rect x="693" y="270" width="5" height="62" fill="#bdb6aa"/><rect x="698" y="277" width="9" height="55" fill="#7e4444"/><rect x="707" y="267" width="5" height="65" fill="#6e6864"/><rect x="712" y="275" width="8" height="57" fill="#9a8e80"/><rect x="720" y="268" width="10" height="64" fill="#3e3a40"/><rect x="730" y="267" width="5" height="65" fill="#857b74"/><rect x="735" y="287" width="3" height="45" fill="#6e6864"/><rect x="618" y="346" width="122" height="66" fill="#e9e5db"/><rect x="620" y="369" width="7" height="43" fill="#d2cdc0"/><rect x="627" y="376" width="10" height="36" fill="#6a6a62"/><rect x="637" y="385" width="10" height="27" fill="#d2cdc0"/><rect x="647" y="383" width="6" height="29" fill="#7c7a70"/><rect x="653" y="385" width="7" height="27" fill="#bcb7aa"/><rect x="660" y="374" width="6" height="38" fill="#6a6a62"/><rect x="666" y="384" width="7" height="28" fill="#7c7a70"/><rect x="673" y="378" width="5" height="34" fill="#bcb7aa"/><rect x="678" y="369" width="9" height="43" fill="#6a6a62"/><rect x="687" y="371" width="8" height="41" fill="#a8a396"/><rect x="695" y="382" width="9" height="30" fill="#8e887c"/><rect x="704" y="364" width="6" height="48" fill="#bcb7aa"/><rect x="710" y="369" width="5" height="43" fill="#d2cdc0"/><rect x="715" y="387" width="8" height="25" fill="#8e887c"/><rect x="723" y="368" width="9" height="44" fill="#a8a396"/><rect x="732" y="386" width="6" height="26" fill="#d2cdc0"/>
<rect x="744" y="15" width="41" height="568" fill="#ebe8e0"/>
<!-- lower cabinets -->
<rect x="470" y="418" width="290" height="156" fill="#efece6"/>
<g fill="none" stroke="#d9d5cb" stroke-width="4"><rect x="556" y="432" width="60" height="128"/><rect x="628" y="432" width="60" height="128"/><rect x="696" y="432" width="58" height="128"/></g>
<rect x="440" y="380" width="80" height="36" fill="#8c8478"/><circle cx="497" cy="404" r="14" fill="#2a2a2e"/>
</g>
<g filter="url(#bl3b)">
<!-- jacket -->
<path d="M120 583 L130 520 Q150 500 175 500 L185 450 Q215 410 290 400 L440 398 Q540 420 570 470 L584 583 Z" fill="#cf9646"/>
<path d="M160 583 L170 500 L130 520 L95 530 L70 540 L70 583 Z" fill="#d9cdb8"/>
<!-- lapels/vest -->
<path d="M278 583 L282 470 L312 430 L330 583 Z" fill="#6b4b3a"/>
<path d="M422 583 L430 420 L462 450 L500 540 L470 583 Z" fill="#7a5644"/>
<!-- shirt -->
<path d="M312 583 L308 440 L350 500 L380 560 L420 470 L432 420 L424 583 Z" fill="#f1efe9"/>
<!-- neck + face -->
<path d="M315 420 L320 470 L372 560 L425 470 L430 400 Z" fill="#b98569"/>
<ellipse cx="436" cy="296" rx="10" ry="30" fill="#c08e74"/>
<path d="M268 290 C262 220 290 170 350 166 C410 170 440 220 436 290 C434 380 410 470 352 474 C300 470 272 380 268 290 Z" fill="#c8967b"/>
<!-- hair -->
<path d="M266 262 C252 170 290 112 345 110 C410 112 448 170 434 268 C428 232 420 200 400 186 C370 172 320 176 296 194 C278 214 272 236 266 262 Z" fill="#9a8e74"/><path d="M290 170 C310 130 370 120 410 150 C370 138 320 146 290 170 Z" fill="#b8ad94"/>
<path d="M398 190 C425 200 436 240 430 280 C420 260 410 230 398 190 Z" fill="#a8a8a4"/>
<!-- glasses -->
<g fill="none" stroke="#7a6658" stroke-width="3.5" stroke-opacity=".85"><rect x="262" y="270" width="72" height="38" rx="12"/><rect x="352" y="266" width="72" height="38" rx="12"/><path d="M334 284 H352 M424 280 L440 274"/></g>
<path d="M300 372 Q340 358 380 372 L372 390 Q340 384 306 390 Z" fill="#b09684" fill-opacity=".8"/>
<path d="M312 394 Q340 388 368 394 Q340 408 312 394 Z" fill="#7a4640"/>
</g>
<rect x="22" y="537" width="186" height="40" fill="#0c0c0c" fill-opacity=".9"/>
<rect x="17.5" y="18.5" width="764" height="561" fill="none" stroke="#45c564" stroke-width="7"/>
</svg>
<span class="t" style="left:734.2px;top:586.7px;font-size:8.2px;line-height:8.2px;color:#fff;font-family:'Liberation Sans',sans-serif;transform-origin:0 50%;transform:scaleX(0.754);-webkit-text-stroke:.3px #fff;">Robert Webb</span>
</body></html>
